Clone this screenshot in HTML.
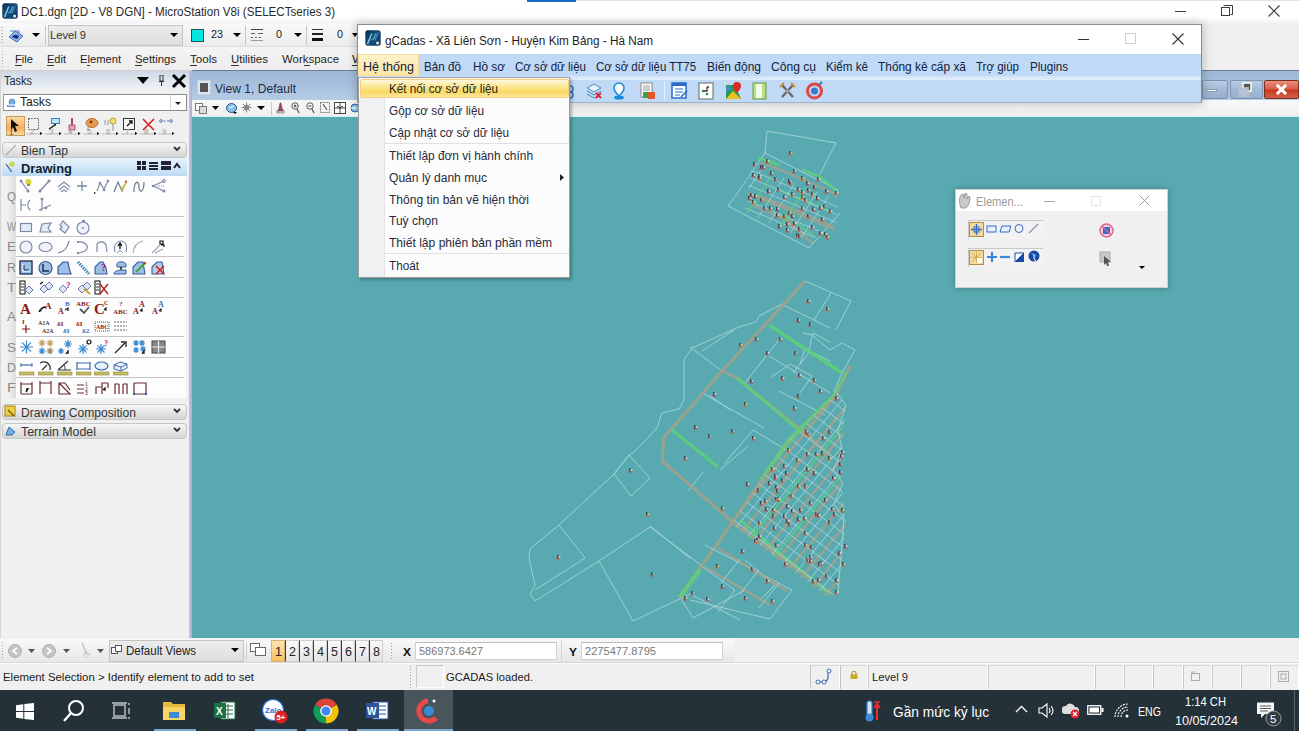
<!DOCTYPE html>
<html><head><meta charset="utf-8">
<style>
*{margin:0;padding:0;box-sizing:border-box}
html,body{width:1299px;height:731px;overflow:hidden;background:#f0f0f0;font-family:"Liberation Sans",sans-serif;color:#000;position:relative}
.a{position:absolute;display:block}
.t{position:absolute;white-space:pre;transform-origin:0 0}
</style></head><body>
<div class="a" style="left:0px;top:0px;width:1299px;height:23px;background:linear-gradient(#ffffff 0,#ffffff 17px,#f3f3f3 23px)"></div>
<div class="a" style="left:527px;top:0px;width:49px;height:2px;background:#1a6ec2"></div>
<div class="a" style="left:576px;top:0px;width:723px;height:1px;background:#e2e2e2"></div>
<svg class="a" style="left:2px;top:3px;" width="16" height="16" viewBox="0 0 16 16"><defs><linearGradient id="lg1" x1="0" y1="0" x2="1" y2="1"><stop offset="0" stop-color="#0a2c4c"/><stop offset=".5" stop-color="#17507e"/><stop offset="1" stop-color="#0c3456"/></linearGradient></defs><rect x="0.3" y="0.3" width="15.4" height="15.4" rx="2.5" fill="url(#lg1)"/><path d="M2.5 14 L6.8 3.5" stroke="#86ccf2" stroke-width="1.4"/><path d="M6.2 9.5 C8 10.5 9.5 8 10.5 3.5" stroke="#5aa4d6" stroke-width="1.2" fill="none"/><path d="M9.8 10.5 L12.8 3" stroke="#4a90c8" stroke-width="1.1"/><circle cx="12.6" cy="13" r="1.5" fill="#d8ecf8"/></svg>
<div class="t" style="left:21px;top:5.84px;font-size:12px;line-height:12px;color:#2a2a2a;transform:scaleX(0.9668);">DC1.dgn [2D - V8 DGN] - MicroStation V8i (SELECTseries 3)</div>
<div class="a" style="left:1175px;top:11px;width:11px;height:1px;background:#3a3a3a"></div>
<svg class="a" style="left:1221px;top:5px;" width="12" height="12" viewBox="0 0 12 12"><rect x="0.5" y="2.5" width="8" height="8" fill="#fff" stroke="#3a3a3a"/><path d="M2.5 0.5h9v9h-2" fill="none" stroke="#3a3a3a"/></svg>
<svg class="a" style="left:1268px;top:5px;" width="12" height="12" viewBox="0 0 12 12"><path d="M0.5 0.5L11.5 11.5M11.5 0.5L0.5 11.5" stroke="#3a3a3a" stroke-width="1.1"/></svg>
<div class="a" style="left:0px;top:23px;width:1299px;height:24px;background:linear-gradient(#f9f9f9,#ebebeb)"></div>
<div class="a" style="left:0px;top:46px;width:1202px;height:1px;background:#dcdcdc"></div>
<svg class="a" style="left:1px;top:27px;" width="2" height="16" viewBox="0 0 2 16"><rect x="0" y="0" width="2" height="1" fill="#b8b8b8"/><rect x="0" y="3" width="2" height="1" fill="#b8b8b8"/><rect x="0" y="6" width="2" height="1" fill="#b8b8b8"/><rect x="0" y="9" width="2" height="1" fill="#b8b8b8"/><rect x="0" y="12" width="2" height="1" fill="#b8b8b8"/><rect x="0" y="15" width="2" height="1" fill="#b8b8b8"/></svg>
<svg class="a" style="left:7px;top:28px;" width="17" height="15" viewBox="0 0 17 15"><path d="M2 9 L8 3 L16 8 L10 14 Z" fill="#8fb6e6" stroke="#3f6fc0"/><path d="M5 9 C7 6 10 6 12 9 L10 11 Z" fill="#1a2a80"/><path d="M3 3 h9 v5" stroke="#5a80c0" fill="none"/></svg>
<svg class="a" style="left:32px;top:33px;" width="8" height="4" viewBox="0 0 8 4"><path d="M0 0H8L4.0 4Z" fill="#000"/></svg>
<div class="a" style="left:45px;top:26px;width:1px;height:19px;background:#c8c8c8"></div>
<div class="a" style="left:48px;top:25px;width:135px;height:21px;background:linear-gradient(#ececec,#dedede);border:1px solid #c3c3c3"></div>
<div class="t" style="left:50px;top:29.69px;font-size:11px;line-height:11px;color:#333;transform:scaleX(1.0145);">Level 9</div>
<svg class="a" style="left:170px;top:33px;" width="8" height="4" viewBox="0 0 8 4"><path d="M0 0H8L4.0 4Z" fill="#000"/></svg>
<div class="a" style="left:191px;top:29px;width:13px;height:13px;background:#06e6e0;border:1px solid #205858"></div>
<div class="t" style="left:211px;top:29.27px;font-size:11.5px;line-height:11.5px;color:#222;transform:scaleX(0.9377);">23</div>
<svg class="a" style="left:233px;top:33px;" width="8" height="4" viewBox="0 0 8 4"><path d="M0 0H8L4.0 4Z" fill="#000"/></svg>
<div class="a" style="left:245px;top:26px;width:1px;height:19px;background:#c8c8c8"></div>
<svg class="a" style="left:251px;top:28px;" width="13" height="14" viewBox="0 0 13 14"><rect x="0" y="1" width="12" height="1" fill="#444"/><rect x="0" y="5" width="4" height="1" fill="#666"/><rect x="7" y="5" width="5" height="1" fill="#666"/><rect x="0" y="9" width="2" height="1" fill="#666"/><rect x="4" y="9" width="2" height="1" fill="#666"/><rect x="8" y="9" width="2" height="1" fill="#666"/><rect x="0" y="12" width="12" height="1" fill="#999"/></svg>
<div class="t" style="left:276px;top:29.27px;font-size:11.5px;line-height:11.5px;color:#222;transform:scaleX(0.9366);">0</div>
<svg class="a" style="left:294px;top:33px;" width="8" height="4" viewBox="0 0 8 4"><path d="M0 0H8L4.0 4Z" fill="#000"/></svg>
<div class="a" style="left:306px;top:26px;width:1px;height:19px;background:#c8c8c8"></div>
<svg class="a" style="left:312px;top:28px;" width="12" height="14" viewBox="0 0 12 14"><rect x="0" y="1" width="11" height="1" fill="#333"/><rect x="0" y="5" width="11" height="2" fill="#222"/><rect x="0" y="10" width="11" height="3" fill="#111"/></svg>
<div class="t" style="left:337px;top:29.27px;font-size:11.5px;line-height:11.5px;color:#222;transform:scaleX(0.9366);">0</div>
<svg class="a" style="left:352px;top:33px;" width="6" height="4" viewBox="0 0 6 4"><path d="M0 0H6L3.0 4Z" fill="#000"/></svg>
<div class="a" style="left:0px;top:47px;width:1299px;height:24px;background:linear-gradient(#f4f4f4,#ededed)"></div>
<svg class="a" style="left:2px;top:51px;" width="2" height="16" viewBox="0 0 2 16"><rect x="0" y="0" width="1" height="1" fill="#aaa"/><rect x="0" y="3" width="1" height="1" fill="#aaa"/><rect x="0" y="6" width="1" height="1" fill="#aaa"/><rect x="0" y="9" width="1" height="1" fill="#aaa"/><rect x="0" y="12" width="1" height="1" fill="#aaa"/><rect x="0" y="15" width="1" height="1" fill="#aaa"/></svg>
<div class="t" style="left:15px;top:54.43px;font-size:11.3px;line-height:11.3px;color:#1e1e1e;transform:scaleX(0.9888);">File</div>
<div class="a" style="left:15px;top:65px;width:7px;height:1px;background:#333"></div>
<div class="t" style="left:47px;top:54.43px;font-size:11.3px;line-height:11.3px;color:#1e1e1e;transform:scaleX(0.9759);">Edit</div>
<div class="a" style="left:47px;top:65px;width:7px;height:1px;background:#333"></div>
<div class="t" style="left:80px;top:54.43px;font-size:11.3px;line-height:11.3px;color:#1e1e1e;transform:scaleX(0.9891);">Element</div>
<div class="a" style="left:87px;top:65px;width:3px;height:1px;background:#333"></div>
<div class="t" style="left:135px;top:54.43px;font-size:11.3px;line-height:11.3px;color:#1e1e1e;transform:scaleX(1.0042);">Settings</div>
<div class="a" style="left:135px;top:65px;width:7px;height:1px;background:#333"></div>
<div class="t" style="left:190px;top:54.43px;font-size:11.3px;line-height:11.3px;color:#1e1e1e;transform:scaleX(1.0237);">Tools</div>
<div class="a" style="left:190px;top:65px;width:7px;height:1px;background:#333"></div>
<div class="t" style="left:231px;top:54.43px;font-size:11.3px;line-height:11.3px;color:#1e1e1e;transform:scaleX(1.0163);">Utilities</div>
<div class="a" style="left:231px;top:65px;width:8px;height:1px;background:#333"></div>
<div class="t" style="left:282px;top:54.43px;font-size:11.3px;line-height:11.3px;color:#1e1e1e;transform:scaleX(1.0125);">Workspace</div>
<div class="a" style="left:304px;top:65px;width:6px;height:1px;background:#333"></div>
<div class="t" style="left:352px;top:54.43px;font-size:11.3px;line-height:11.3px;color:#1e1e1e;transform:scaleX(1.1245);">W</div>
<div class="a" style="left:352px;top:65px;width:8px;height:1px;background:#333"></div>
<div class="a" style="left:0px;top:70px;width:1299px;height:1px;background:#d0d0d0"></div>
<div class="a" style="left:1202px;top:23px;width:97px;height:47px;background:#efefef"></div>
<div class="a" style="left:0px;top:71px;width:189px;height:567px;background:#f0f0f0"></div>
<div class="a" style="left:0px;top:71px;width:1px;height:567px;background:#d6d6d6"></div>
<div class="a" style="left:1px;top:71px;width:188px;height:20px;background:linear-gradient(#cdd7e4,#e6ecf3 70%,#eef2f6)"></div>
<div class="t" style="left:4px;top:74.84px;font-size:12px;line-height:12px;color:#1c2a3c;transform:scaleX(0.9124);">Tasks</div>
<svg class="a" style="left:137px;top:77px;" width="12" height="7" viewBox="0 0 12 7"><path d="M0 0H12L6.0 7Z" fill="#000"/></svg>
<svg class="a" style="left:159px;top:75px;" width="6" height="11" viewBox="0 0 6 11"><rect x="1" y="0" width="3" height="6" fill="none" stroke="#333"/><rect x="0" y="6" width="5" height="1" fill="#333"/><rect x="2" y="7" width="1" height="4" fill="#333"/></svg>
<svg class="a" style="left:171px;top:73px;" width="16" height="16" viewBox="0 0 16 16"><path d="M2 2L14 14M14 2L2 14" stroke="#000" stroke-width="3"/></svg>
<div class="a" style="left:3px;top:94px;width:184px;height:17px;background:#fff;border:1px solid #8a8a8a;border-left-color:#a0a0a0"></div>
<div class="a" style="left:170px;top:95px;width:1px;height:15px;background:#d8d8d8"></div>
<svg class="a" style="left:6px;top:98px;" width="11" height="10" viewBox="0 0 11 10"><path d="M1 7 h8 v2 h-8z" fill="#5a8ad0"/><circle cx="6" cy="4" r="3" fill="#7aa8e0" stroke="#3a6ab0" stroke-width="0.6"/><rect x="2" y="6" width="7" height="2" fill="#c8daf0"/></svg>
<div class="t" style="left:20px;top:95.84px;font-size:12px;line-height:12px;color:#222;transform:scaleX(1.0102);">Tasks</div>
<svg class="a" style="left:175px;top:102px;" width="6" height="3" viewBox="0 0 6 3"><path d="M0 0H6L3.0 3Z" fill="#222"/></svg>
<div class="a" style="left:6px;top:116px;width:19px;height:20px;background:linear-gradient(#fbd9a6,#f5b060 60%,#f9d89c);border:1px solid #c89b5a"></div>
<svg class="a" style="left:10px;top:119px;" width="10" height="14" viewBox="0 0 10 14"><path d="M1 0 L9 7 L5 7 L7 12 L5 13 L3 8 L1 11 Z" fill="#111"/></svg>
<svg class="a" style="left:7px;top:126px;" width="14" height="10" viewBox="0 0 14 10"><text x="2" y="9" font-size="8" font-family="Liberation Sans" fill="#6a5a3a">1</text><path d="M1 9.5 h12" stroke="#b89a6a"/></svg>
<svg class="a" style="left:25px;top:117px;" width="19" height="19" viewBox="0 0 19 19"><rect x="3.5" y="1.5" width="10" height="11" fill="none" stroke="#555" stroke-dasharray="1.5 1.2"/><path d="M1 17 h15" stroke="#b8b8b8" stroke-width="1"/><text x="5" y="16.5" font-size="8" font-family="Liberation Sans" fill="#9a9a9a">2</text><path d="M15 15 l2.5 1.5 -2.5 1.5z" fill="#000"/></svg>
<svg class="a" style="left:44px;top:117px;" width="19" height="19" viewBox="0 0 19 19"><rect x="7.5" y="1.5" width="8" height="5" fill="#bfe6f8" stroke="#3a80c0"/><path d="M5 12 L11 8" stroke="#111" stroke-width="1.3"/><path d="M10 7 l2 0 0 2z" fill="#111"/><path d="M1 17 h15" stroke="#b8b8b8" stroke-width="1"/><text x="5" y="16.5" font-size="8" font-family="Liberation Sans" fill="#9a9a9a">3</text><path d="M15 15 l2.5 1.5 -2.5 1.5z" fill="#000"/></svg>
<svg class="a" style="left:63px;top:117px;" width="19" height="19" viewBox="0 0 19 19"><path d="M9 1 V8" stroke="#b04060" stroke-width="2"/><path d="M6 8 h6 v5 h-6z" fill="#e8a0b0" stroke="#a04060" stroke-width="0.8"/><path d="M1 17 h15" stroke="#b8b8b8" stroke-width="1"/><text x="5" y="16.5" font-size="8" font-family="Liberation Sans" fill="#9a9a9a">4</text><path d="M15 15 l2.5 1.5 -2.5 1.5z" fill="#000"/></svg>
<svg class="a" style="left:82px;top:117px;" width="19" height="19" viewBox="0 0 19 19"><ellipse cx="10" cy="6" rx="6" ry="4.5" fill="#e89a50" stroke="#b06020" stroke-width="0.8"/><circle cx="9" cy="5" r="1.4" fill="#7a3a10"/><path d="M6 10 v4" stroke="#888"/><path d="M1 17 h15" stroke="#b8b8b8" stroke-width="1"/><text x="5" y="16.5" font-size="8" font-family="Liberation Sans" fill="#9a9a9a">5</text><path d="M15 15 l2.5 1.5 -2.5 1.5z" fill="#000"/></svg>
<svg class="a" style="left:101px;top:117px;" width="19" height="19" viewBox="0 0 19 19"><circle cx="12" cy="4" r="3" fill="#f0e070" stroke="#a09020" stroke-width="0.8"/><path d="M12 7 V14 M4 3 v5 M7 3 v5" stroke="#9a9aaa" stroke-width="1.1"/><path d="M1 17 h15" stroke="#b8b8b8" stroke-width="1"/><text x="5" y="16.5" font-size="8" font-family="Liberation Sans" fill="#9a9a9a">6</text><path d="M15 15 l2.5 1.5 -2.5 1.5z" fill="#000"/></svg>
<svg class="a" style="left:120px;top:117px;" width="19" height="19" viewBox="0 0 19 19"><rect x="3.5" y="1.5" width="11" height="11" fill="#f8f8f8" stroke="#333"/><path d="M7 9 L12 4 M9 4 h3 v3" stroke="#111" stroke-width="1.3" fill="none"/><path d="M1 17 h15" stroke="#b8b8b8" stroke-width="1"/><text x="5" y="16.5" font-size="8" font-family="Liberation Sans" fill="#9a9a9a">7</text><path d="M15 15 l2.5 1.5 -2.5 1.5z" fill="#000"/></svg>
<svg class="a" style="left:139px;top:117px;" width="19" height="19" viewBox="0 0 19 19"><path d="M4 2 L15 13 M15 2 L4 13" stroke="#d02020" stroke-width="1.6"/><path d="M1 17 h15" stroke="#b8b8b8" stroke-width="1"/><text x="5" y="16.5" font-size="8" font-family="Liberation Sans" fill="#9a9a9a">8</text><path d="M15 15 l2.5 1.5 -2.5 1.5z" fill="#000"/></svg>
<svg class="a" style="left:157px;top:117px;" width="19" height="19" viewBox="0 0 19 19"><path d="M3 4 h12" stroke="#5a70b0" stroke-dasharray="2 1.5"/><circle cx="4" cy="4" r="1.3" fill="#fff" stroke="#5a70b0"/><circle cx="14" cy="4" r="1.3" fill="#fff" stroke="#5a70b0"/><path d="M1 17 h15" stroke="#b8b8b8" stroke-width="1"/><text x="5" y="16.5" font-size="8" font-family="Liberation Sans" fill="#9a9a9a">9</text><path d="M15 15 l2.5 1.5 -2.5 1.5z" fill="#000"/></svg>
<div class="a" style="left:2px;top:142px;width:185px;height:16px;background:linear-gradient(#f7f7f7,#e2e2e2 60%,#d6d6d6);border:1px solid #c6c6c6;border-radius:4px"></div>
<svg class="a" style="left:5px;top:144px;" width="12" height="12" viewBox="0 0 12 12"><path d="M1 11 L11 1" stroke="#b0b0b0" stroke-width="1.2"/></svg>
<div class="t" style="left:21px;top:144.84px;font-size:12px;line-height:12px;color:#333;transform:scaleX(1.0111);">Bien Tap</div>
<svg class="a" style="left:173px;top:146px;" width="8" height="6" viewBox="0 0 8 6"><path d="M1 1 L4 4 L7 1" stroke="#333" stroke-width="1.8" fill="none"/></svg>
<div class="a" style="left:2px;top:158px;width:185px;height:18px;background:linear-gradient(#e8f2fb,#cfe5f8 60%,#bcdaf4)"></div>
<svg class="a" style="left:5px;top:160px;" width="11" height="13" viewBox="0 0 11 13"><path d="M1 4 L6 11" stroke="#555" stroke-width="1.2"/><circle cx="7" cy="4" r="2.6" fill="#c8d850"/><circle cx="6" cy="11" r="1.3" fill="#7090c0"/></svg>
<div class="t" style="left:21px;top:163.42px;font-size:12.5px;line-height:12.5px;color:#0f1f30;font-weight:700;transform:scaleX(1.0342);">Drawing</div>
<svg class="a" style="left:137px;top:161px;" width="44" height="10" viewBox="0 0 44 10"><rect x="0" y="0" width="4" height="4" fill="#223"/><rect x="5" y="0" width="4" height="4" fill="#223"/><rect x="0" y="5" width="4" height="4" fill="#223"/><rect x="5" y="5" width="4" height="4" fill="#223"/><rect x="12" y="1" width="9" height="2" fill="#223"/><rect x="12" y="4" width="9" height="2" fill="#223"/><rect x="12" y="7" width="9" height="2" fill="#223"/><rect x="24" y="0" width="10" height="4" fill="#223"/><rect x="24" y="5" width="10" height="4" fill="#223"/><path d="M37 7 L40 3 L43 7" stroke="#223" stroke-width="2" fill="none"/></svg>
<div class="a" style="left:7px;top:176px;width:179px;height:222px;background:#fdfdfd"></div>
<div class="a" style="left:7px;top:176px;width:9px;height:222px;background:linear-gradient(90deg,#f2f2f2,#dcdcdc)"></div>
<div class="a" style="left:16px;top:216px;width:168px;height:1px;background:#c4c4c4"></div>
<div class="a" style="left:16px;top:236px;width:168px;height:1px;background:#c4c4c4"></div>
<div class="a" style="left:16px;top:256px;width:168px;height:1px;background:#c4c4c4"></div>
<div class="a" style="left:16px;top:277px;width:168px;height:1px;background:#c4c4c4"></div>
<div class="a" style="left:16px;top:297px;width:168px;height:1px;background:#c4c4c4"></div>
<div class="a" style="left:16px;top:336px;width:168px;height:1px;background:#c4c4c4"></div>
<div class="a" style="left:16px;top:357px;width:168px;height:1px;background:#c4c4c4"></div>
<div class="a" style="left:16px;top:377px;width:168px;height:1px;background:#c4c4c4"></div>
<div class="t" style="left:7px;top:190.84px;font-size:12px;line-height:12px;color:#8a8a8a;transform:scaleX(0.9632);">Q</div>
<div class="t" style="left:7px;top:220.84px;font-size:12px;line-height:12px;color:#8a8a8a;transform:scaleX(0.7945);">W</div>
<div class="t" style="left:7px;top:240.84px;font-size:12px;line-height:12px;color:#8a8a8a;transform:scaleX(1.1228);">E</div>
<div class="t" style="left:7px;top:261.84px;font-size:12px;line-height:12px;color:#8a8a8a;transform:scaleX(1.0378);">R</div>
<div class="t" style="left:7px;top:281.84px;font-size:12px;line-height:12px;color:#8a8a8a;transform:scaleX(1.2255);">T</div>
<div class="t" style="left:7px;top:310.84px;font-size:12px;line-height:12px;color:#8a8a8a;transform:scaleX(1.1228);">A</div>
<div class="t" style="left:7px;top:341.84px;font-size:12px;line-height:12px;color:#8a8a8a;transform:scaleX(1.1228);">S</div>
<div class="t" style="left:7px;top:361.84px;font-size:12px;line-height:12px;color:#8a8a8a;transform:scaleX(1.0378);">D</div>
<div class="t" style="left:7px;top:381.84px;font-size:12px;line-height:12px;color:#8a8a8a;transform:scaleX(1.2255);">F</div>
<svg class="a" style="left:19px;top:178px;" width="16" height="17" viewBox="0 0 16 17"><path d="M2 3 L9 13" stroke="#7d8aa6" stroke-width="1.3"/><circle cx="2" cy="3" r="1.5" fill="#7d8aa6"/><circle cx="9" cy="13" r="1.5" fill="#7d8aa6"/><circle cx="9.5" cy="4" r="3" fill="#d6d83a"/><rect x="8" y="6" width="3" height="2" fill="#8a9a3a"/></svg>
<svg class="a" style="left:38px;top:178px;" width="16" height="17" viewBox="0 0 16 17"><path d="M2 13 L11 3" stroke="#7d8aa6" stroke-width="1.3"/><circle cx="2" cy="13" r="1.5" fill="#7d8aa6"/><circle cx="11" cy="3" r="1.5" fill="#7d8aa6"/></svg>
<svg class="a" style="left:57px;top:178px;" width="16" height="17" viewBox="0 0 16 17"><path d="M1 9 L7 4 L13 9 M2 12 L7 8 L12 12 M4 14 L7 12 L10 14" stroke="#7d8aa6" stroke-width="1.1" fill="none"/></svg>
<svg class="a" style="left:76px;top:178px;" width="16" height="17" viewBox="0 0 16 17"><path d="M6 3 V13 M1 8 H11" stroke="#7d8aa6" stroke-width="1.3"/></svg>
<svg class="a" style="left:94px;top:178px;" width="16" height="17" viewBox="0 0 16 17"><path d="M3 13 L6 5 L10 11 L14 3" stroke="#7d8aa6" stroke-width="1.2" fill="none"/><circle cx="6" cy="5" r="1.3" fill="#7d8aa6"/><circle cx="14" cy="3" r="1.3" fill="#7d8aa6"/><circle cx="10" cy="12" r="1.3" fill="#7d8aa6"/><path d="M0 14 l2 1 -2 1z" fill="#000"/></svg>
<svg class="a" style="left:113px;top:178px;" width="16" height="17" viewBox="0 0 16 17"><path d="M1 14 L5 4 L9 13 L13 4" stroke="#707a90" stroke-width="1.2" fill="none"/><path d="M8 12 L13 5" stroke="#c8c840" stroke-width="2"/><path d="M12 3 l2 1" stroke="#c05050" stroke-width="1.5"/></svg>
<svg class="a" style="left:132px;top:178px;" width="16" height="17" viewBox="0 0 16 17"><path d="M2 14 C2 2 7 2 7 9 C7 15 12 15 12 4" stroke="#707a90" stroke-width="1.2" fill="none"/></svg>
<svg class="a" style="left:151px;top:178px;" width="16" height="17" viewBox="0 0 16 17"><path d="M13 3 L2 8 L13 13" stroke="#7d8aa6" stroke-width="1.2" fill="none"/><circle cx="13" cy="3" r="1.5" fill="none" stroke="#7d8aa6"/><circle cx="13" cy="13" r="1.5" fill="#7d8aa6"/><circle cx="2" cy="8" r="1.3" fill="#7d8aa6"/><path d="M6 8 h7" stroke="#7d8aa6" stroke-dasharray="1 1"/></svg>
<svg class="a" style="left:19px;top:197px;" width="16" height="17" viewBox="0 0 16 17"><path d="M2 2 V14 M2 8 H7 M11 3 C8 6 8 10 11 13" stroke="#7d8aa6" stroke-width="1.2" fill="none"/></svg>
<svg class="a" style="left:38px;top:197px;" width="16" height="17" viewBox="0 0 16 17"><path d="M4 2 V11 L3 14 M1 13 L13 8" stroke="#7d8aa6" stroke-width="1.2" fill="none"/><circle cx="4" cy="2" r="1.5" fill="#7d8aa6"/><circle cx="8" cy="11" r="1.3" fill="#7d8aa6"/></svg>
<svg class="a" style="left:19px;top:219px;" width="16" height="17" viewBox="0 0 16 17"><rect x="1.5" y="4.5" width="11" height="8" fill="#e4ecf8" stroke="#7d8aa6" stroke-width="1.2"/></svg>
<svg class="a" style="left:38px;top:219px;" width="16" height="17" viewBox="0 0 16 17"><path d="M2 13 L4 5 L13 4 L10 9 L13 13 Z" fill="#e4ecf8" stroke="#7d8aa6" stroke-width="1.2"/></svg>
<svg class="a" style="left:57px;top:219px;" width="16" height="17" viewBox="0 0 16 17"><path d="M3 6 L6 2 L12 8 L8 14 L3 10 L5 8 Z" fill="#e4ecf8" stroke="#7d8aa6" stroke-width="1.2"/></svg>
<svg class="a" style="left:76px;top:219px;" width="16" height="17" viewBox="0 0 16 17"><circle cx="7" cy="9" r="6" fill="#eef2fa" stroke="#7d8aa6" stroke-width="1.2"/><circle cx="7" cy="9" r="1" fill="#7d8aa6"/><rect x="6" y="1" width="3" height="2" fill="#7d8aa6"/></svg>
<svg class="a" style="left:19px;top:239px;" width="16" height="17" viewBox="0 0 16 17"><circle cx="7" cy="8" r="6" fill="#f0f4fa" stroke="#7d8aa6" stroke-width="1.2"/></svg>
<svg class="a" style="left:38px;top:239px;" width="16" height="17" viewBox="0 0 16 17"><ellipse cx="7.5" cy="8" rx="6.5" ry="4.5" fill="#f0f4fa" stroke="#7d8aa6" stroke-width="1.2"/></svg>
<svg class="a" style="left:57px;top:239px;" width="16" height="17" viewBox="0 0 16 17"><path d="M1 14 C7 13 11 8 12 2" stroke="#6a7890" stroke-width="1.2" fill="none"/></svg>
<svg class="a" style="left:76px;top:239px;" width="16" height="17" viewBox="0 0 16 17"><path d="M2 3 C10 2 14 8 9 12 L3 14" stroke="#7d8aa6" stroke-width="1.2" fill="none"/><rect x="1" y="2" width="2" height="2" fill="#7d8aa6"/><rect x="1" y="13" width="2" height="2" fill="#7d8aa6"/></svg>
<svg class="a" style="left:94px;top:239px;" width="16" height="17" viewBox="0 0 16 17"><path d="M3 13 V5 C5 2 10 2 12 6 L13 13" stroke="#7d8aa6" stroke-width="1.2" fill="none"/></svg>
<svg class="a" style="left:113px;top:239px;" width="16" height="17" viewBox="0 0 16 17"><path d="M2 13 C0 5 5 2 8 2 C11 2 15 5 13 13" stroke="#7d8aa6" stroke-width="1.1" fill="none"/><path d="M7 10 V5 M5 7 L7 4 L9 7" stroke="#111" stroke-width="1.3" fill="none"/><path d="M4 14 L7 11 L10 14" stroke="#7d8aa6" fill="none"/></svg>
<svg class="a" style="left:132px;top:239px;" width="16" height="17" viewBox="0 0 16 17"><path d="M1 14 C2 7 6 3 11 2" stroke="#9aa4b8" stroke-width="1.1" fill="none"/></svg>
<svg class="a" style="left:151px;top:239px;" width="16" height="17" viewBox="0 0 16 17"><path d="M1 14 L9 6 M4 14 L12 10" stroke="#9aa4b8" stroke-width="1.1" fill="none"/><path d="M9 2 h3 v3 h-3z M10 6 h3 v2" stroke="#111" stroke-width="1.2" fill="none"/></svg>
<svg class="a" style="left:0px;top:0px;" width="1" height="1" viewBox="0 0 1 1"><defs><pattern id="hp" width="3" height="3" patternUnits="userSpaceOnUse"><path d="M0 3L3 0" stroke="#3a5a9a" stroke-width="0.8"/></pattern></defs></svg>
<svg class="a" style="left:19px;top:260px;" width="16" height="17" viewBox="0 0 16 17"><rect x="1" y="1" width="12" height="13" fill="#9cc0e8" stroke="#1a2a4a" stroke-width="1.3"/><path d="M4 4 V11 H11" stroke="#fff" stroke-width="1.2" fill="none"/><path d="M5 5 V10 H10" stroke="#1a2a4a" fill="none"/></svg>
<svg class="a" style="left:38px;top:260px;" width="16" height="17" viewBox="0 0 16 17"><circle cx="7.5" cy="8" r="6.5" fill="#9cc0e8" stroke="#3a5a9a" stroke-width="1.2"/><path d="M5 4 V11 H11" stroke="#1a2a4a" stroke-width="1.5" fill="none"/></svg>
<svg class="a" style="left:57px;top:260px;" width="16" height="17" viewBox="0 0 16 17"><path d="M1 14 V7 L6 2 H11 L12 8 L14 14 Z" fill="#9cc0e8" stroke="#3a5a9a" stroke-width="1.2"/></svg>
<svg class="a" style="left:76px;top:260px;" width="16" height="17" viewBox="0 0 16 17"><path d="M2 2 L13 14" stroke="#3a80b0" stroke-width="3" stroke-dasharray="1.5 1"/></svg>
<svg class="a" style="left:94px;top:260px;" width="16" height="17" viewBox="0 0 16 17"><path d="M1 14 V7 L6 2 H9 L12 8 L13 14 Z" fill="#9cc0e8" stroke="#3a5a9a" stroke-width="1.1"/><text x="7" y="11" font-size="10" font-family="Liberation Serif" font-weight="700" fill="#a02080">?</text></svg>
<svg class="a" style="left:113px;top:260px;" width="16" height="17" viewBox="0 0 16 17"><path d="M4 4 C4 1 13 1 13 5 L13 7 H4Z" fill="#9cc0e8" stroke="#3a5a9a"/><path d="M1 14 C1 11 4 10 13 10 V14 Z" fill="#9cc0e8" stroke="#3a5a9a"/><path d="M8 7 V10" stroke="#111" stroke-width="1.4"/></svg>
<svg class="a" style="left:132px;top:260px;" width="16" height="17" viewBox="0 0 16 17"><path d="M1 14 V7 L6 2 H11 L13 14 Z" fill="#9cc0e8" stroke="#3a5a9a" stroke-width="1.1"/><path d="M4 12 L13 3" stroke="#40a040" stroke-width="2"/><path d="M12 2 L14 4" stroke="#c03030" stroke-width="1.5"/></svg>
<svg class="a" style="left:151px;top:260px;" width="16" height="17" viewBox="0 0 16 17"><path d="M1 14 V7 L6 2 H11 L13 14 Z" fill="#b8cce8" stroke="#3a5a9a" stroke-width="1.1"/><path d="M5 6 L13 14 M13 6 L5 14" stroke="#d02020" stroke-width="1.6"/></svg>
<svg class="a" style="left:19px;top:280px;" width="16" height="17" viewBox="0 0 16 17"><rect x="1" y="1" width="5" height="13" fill="#fff" stroke="#333" stroke-width="1.2"/><path d="M2 4h3M2 7h3M2 10h3" stroke="#333"/><path d="M6 10 L10 6 L14 10 L10 14Z" fill="#dce8f8" stroke="#5a7ab0"/></svg>
<svg class="a" style="left:38px;top:280px;" width="16" height="17" viewBox="0 0 16 17"><path d="M2 9 L6 5 L10 9 L6 13Z M7 6 L11 2 L15 6 L11 10Z" fill="#dce8f8" stroke="#6a7aa0"/><path d="M2 4 L5 2" stroke="#111" stroke-width="1.4"/></svg>
<svg class="a" style="left:57px;top:280px;" width="16" height="17" viewBox="0 0 16 17"><path d="M2 9 L6 5 L10 9 L6 13Z" fill="#dce8f8" stroke="#6a7aa0"/><text x="9" y="8" font-size="9" font-family="Liberation Serif" font-weight="700" fill="#c02080">?</text></svg>
<svg class="a" style="left:76px;top:280px;" width="16" height="17" viewBox="0 0 16 17"><path d="M2 9 L6 5 L10 9 L6 13Z M7 6 L11 2 L15 6 L11 10Z" fill="#dce8f8" stroke="#6a7aa0"/><path d="M8 9 L14 14" stroke="#c8a040" stroke-width="2"/></svg>
<svg class="a" style="left:94px;top:280px;" width="16" height="17" viewBox="0 0 16 17"><rect x="1" y="1" width="5" height="13" fill="#fff" stroke="#333" stroke-width="1.2"/><path d="M2 4h3M2 7h3M2 10h3" stroke="#333"/><path d="M6 4 L14 14 M14 4 L6 14" stroke="#b02020" stroke-width="1.4"/></svg>
<svg class="a" style="left:19px;top:299px;" width="16" height="17" viewBox="0 0 16 17"><text x="1" y="15" font-size="15" font-family="Liberation Serif" font-weight="700" fill="#8a1a1a">A</text></svg>
<svg class="a" style="left:38px;top:299px;" width="16" height="17" viewBox="0 0 16 17"><path d="M1 13 C3 9 5 8 8 8" stroke="#111" stroke-width="1.3" fill="none"/><path d="M1 13 l1 -3 2 2z" fill="#111"/><text x="7" y="10" font-size="9" font-family="Liberation Serif" font-weight="700" fill="#8a1a1a">A</text></svg>
<svg class="a" style="left:57px;top:299px;" width="16" height="17" viewBox="0 0 16 17"><text x="1" y="15" font-size="8" font-family="Liberation Serif" font-weight="700" fill="#8a1a1a">A</text><text x="8" y="7" font-size="7" font-family="Liberation Serif" font-weight="700" fill="#3a6ab0">B</text><path d="M8 11 l3 -2 v3" stroke="#111" stroke-width="1.2" fill="none"/></svg>
<svg class="a" style="left:76px;top:299px;" width="17" height="17" viewBox="0 0 17 17"><text x="0" y="7" font-size="7" font-family="Liberation Serif" font-weight="700" fill="#8a1a1a">ABC</text><path d="M4 10 L8 14 L13 8" stroke="#555" stroke-width="1.8" fill="none"/></svg>
<svg class="a" style="left:94px;top:299px;" width="16" height="17" viewBox="0 0 16 17"><text x="0" y="15" font-size="15" font-family="Liberation Serif" font-weight="700" fill="#8a1a1a">C</text><text x="10" y="6" font-size="6" font-family="Liberation Serif" font-weight="700" fill="#8a1a1a">C</text><path d="M10 11 l2 -2 v3" stroke="#111" stroke-width="1.1" fill="none"/></svg>
<svg class="a" style="left:113px;top:299px;" width="17" height="17" viewBox="0 0 17 17"><text x="6" y="7" font-size="7" font-family="Liberation Serif" font-weight="700" fill="#c02080">?</text><text x="0" y="15" font-size="7" font-family="Liberation Serif" font-weight="700" fill="#8a1a1a">ABC</text></svg>
<svg class="a" style="left:132px;top:299px;" width="16" height="17" viewBox="0 0 16 17"><text x="1" y="15" font-size="8" font-family="Liberation Serif" font-weight="700" fill="#8a1a1a">A</text><text x="7" y="8" font-size="8" font-family="Liberation Serif" font-weight="700" fill="#8a1a1a">A</text><path d="M8 12 l2 -2 v3" stroke="#111" stroke-width="1.1" fill="none"/></svg>
<svg class="a" style="left:151px;top:299px;" width="16" height="17" viewBox="0 0 16 17"><text x="1" y="15" font-size="8" font-family="Liberation Serif" font-weight="700" fill="#8a1a1a">A</text><text x="7" y="8" font-size="8" font-family="Liberation Serif" font-weight="700" fill="#3a6ab0">A</text><path d="M8 12 l2 -2 v3" stroke="#111" stroke-width="1.1" fill="none"/></svg>
<svg class="a" style="left:19px;top:318px;" width="16" height="17" viewBox="0 0 16 17"><path d="M7 7 V15 M3 11 H11" stroke="#8a1a1a" stroke-width="1.2"/><text x="3" y="6" font-size="7" font-family="Liberation Serif" font-weight="700" fill="#8a1a1a">I</text></svg>
<svg class="a" style="left:38px;top:318px;" width="17" height="17" viewBox="0 0 17 17"><text x="0" y="7" font-size="6" font-family="Liberation Serif" font-weight="700" fill="#5a3a3a">A1A</text><text x="4" y="15" font-size="6" font-family="Liberation Serif" font-weight="700" fill="#5a3a3a">A2A</text></svg>
<svg class="a" style="left:57px;top:318px;" width="16" height="17" viewBox="0 0 16 17"><text x="0" y="8" font-size="7" font-family="Liberation Serif" font-weight="700" fill="#8a1a1a">δI</text><text x="6" y="15" font-size="7" font-family="Liberation Serif" font-weight="700" fill="#3a6ab0">δI</text></svg>
<svg class="a" style="left:76px;top:318px;" width="16" height="17" viewBox="0 0 16 17"><text x="0" y="8" font-size="7" font-family="Liberation Serif" font-weight="700" fill="#8a1a1a">δI</text><text x="6" y="15" font-size="7" font-family="Liberation Serif" font-weight="700" fill="#3a6ab0">δ2</text></svg>
<svg class="a" style="left:94px;top:318px;" width="17" height="17" viewBox="0 0 17 17"><rect x="1" y="4" width="14" height="9" fill="none" stroke="#555" stroke-dasharray="1 1"/><text x="2" y="11" font-size="6" font-family="Liberation Serif" font-weight="700" fill="#8a1a1a">ABC</text></svg>
<svg class="a" style="left:113px;top:318px;" width="16" height="17" viewBox="0 0 16 17"><path d="M1 4h13M1 8h13M1 12h13" stroke="#666" stroke-dasharray="2 1"/></svg>
<svg class="a" style="left:19px;top:339px;" width="16" height="17" viewBox="0 0 16 17"><path d="M1.0 8H14.0M7.5 1.5V14.5M2.95 3.45L12.05 12.55M12.05 3.45L2.95 12.55" stroke="#3a8ad0" stroke-width="1.2"/></svg>
<svg class="a" style="left:38px;top:339px;" width="16" height="17" viewBox="0 0 16 17"><path d="M0.5 4H7.5M4 0.5V7.5M1.5500000000000003 1.5500000000000003L6.449999999999999 6.449999999999999M6.449999999999999 1.5500000000000003L1.5500000000000003 6.449999999999999" stroke="#c8a060" stroke-width="1.2"/><path d="M8.5 4H15.5M12 0.5V7.5M9.55 1.5500000000000003L14.45 6.449999999999999M14.45 1.5500000000000003L9.55 6.449999999999999" stroke="#c8a060" stroke-width="1.2"/><path d="M0.5 12H7.5M4 8.5V15.5M1.5500000000000003 9.55L6.449999999999999 14.45M6.449999999999999 9.55L1.5500000000000003 14.45" stroke="#3a8ad0" stroke-width="1.2"/><path d="M8.5 12H15.5M12 8.5V15.5M9.55 9.55L14.45 14.45M14.45 9.55L9.55 14.45" stroke="#a08a70" stroke-width="1.2"/></svg>
<svg class="a" style="left:57px;top:339px;" width="16" height="17" viewBox="0 0 16 17"><path d="M7 5H15M11 1V9M8.2 2.2L13.8 7.8M13.8 2.2L8.2 7.8" stroke="#3a8ad0" stroke-width="1.2"/><path d="M1 12H7M4 9V15M1.9000000000000004 9.9L6.1 14.1M6.1 9.9L1.9000000000000004 14.1" stroke="#3a8ad0" stroke-width="1.2"/><path d="M9 15 l2 -3 v3" stroke="#111" stroke-width="1.2" fill="none"/></svg>
<svg class="a" style="left:76px;top:339px;" width="16" height="17" viewBox="0 0 16 17"><path d="M2 10H12M7 5V15M3.5 6.5L10.5 13.5M10.5 6.5L3.5 13.5" stroke="#3a8ad0" stroke-width="1.2"/><circle cx="13" cy="3" r="2" fill="none" stroke="#111" stroke-width="1.2"/></svg>
<svg class="a" style="left:94px;top:339px;" width="16" height="17" viewBox="0 0 16 17"><path d="M2 10H12M7 5V15M3.5 6.5L10.5 13.5M10.5 6.5L3.5 13.5" stroke="#3a8ad0" stroke-width="1.2"/><text x="10" y="7" font-size="8" font-family="Liberation Serif" font-weight="700" fill="#c02080">?</text></svg>
<svg class="a" style="left:113px;top:339px;" width="16" height="17" viewBox="0 0 16 17"><path d="M2 14 L12 4" stroke="#222" stroke-width="1.3"/><path d="M8 3 H13 V8" stroke="#222" stroke-width="1.3" fill="none"/></svg>
<svg class="a" style="left:132px;top:339px;" width="16" height="17" viewBox="0 0 16 17"><path d="M1 4H7M4 1V7M1.9000000000000004 1.9000000000000004L6.1 6.1M6.1 1.9000000000000004L1.9000000000000004 6.1" stroke="#3a8ad0" stroke-width="1.2"/><path d="M7 4H13M10 1V7M7.9 1.9000000000000004L12.1 6.1M12.1 1.9000000000000004L7.9 6.1" stroke="#3a8ad0" stroke-width="1.2"/><path d="M1 11H7M4 8V14M1.9000000000000004 8.9L6.1 13.1M6.1 8.9L1.9000000000000004 13.1" stroke="#3a8ad0" stroke-width="1.2"/><path d="M8 10H14M11 7V13M8.9 7.9L13.1 12.1M13.1 7.9L8.9 12.1" stroke="#3a8ad0" stroke-width="1.2"/><path d="M10 15 l2 -3 v3" stroke="#111" stroke-width="1.2" fill="none"/></svg>
<svg class="a" style="left:151px;top:339px;" width="16" height="17" viewBox="0 0 16 17"><rect x="1" y="2" width="13" height="12" fill="#8a8a8a" stroke="#444"/><path d="M1 8h13M7.5 2v12" stroke="#eee" stroke-width="1.2"/></svg>
<svg class="a" style="left:19px;top:359px;" width="16" height="17" viewBox="0 0 16 17"><path d="M2 6h11" stroke="#3a6ab0" stroke-width="1.2"/><path d="M2 4v4M13 4v4" stroke="#3a6ab0"/><rect x="0" y="13" width="15" height="3" fill="#c8c060" stroke="#8a8040" stroke-width="0.6"/></svg>
<svg class="a" style="left:38px;top:359px;" width="16" height="17" viewBox="0 0 16 17"><path d="M2 4 C8 1 13 5 12 11" stroke="#333" stroke-width="1.3" fill="none"/><path d="M4 11 L9 6" stroke="#333" stroke-width="1.2"/><rect x="0" y="13" width="15" height="3" fill="#c8c060" stroke="#8a8040" stroke-width="0.6"/></svg>
<svg class="a" style="left:57px;top:359px;" width="16" height="17" viewBox="0 0 16 17"><path d="M1 11 H14 M1 11 L11 2" stroke="#333" stroke-width="1.2" fill="none"/><path d="M7 6 C8 8 8 9 8 11" stroke="#333" fill="none"/><rect x="0" y="13" width="15" height="3" fill="#c8c060" stroke="#8a8040" stroke-width="0.6"/></svg>
<svg class="a" style="left:76px;top:359px;" width="16" height="17" viewBox="0 0 16 17"><path d="M1 3 V11 M14 3 V11 M1 4 H14 M1 10 H14" stroke="#3a6ab0" stroke-width="1.2" fill="none"/><rect x="0" y="13" width="15" height="3" fill="#c8c060" stroke="#8a8040" stroke-width="0.6"/></svg>
<svg class="a" style="left:94px;top:359px;" width="16" height="17" viewBox="0 0 16 17"><ellipse cx="7.5" cy="7" rx="6.5" ry="4" fill="#e8f0f8" stroke="#3a6ab0" stroke-width="1.2"/><rect x="0" y="13" width="15" height="3" fill="#c8c060" stroke="#8a8040" stroke-width="0.6"/></svg>
<svg class="a" style="left:113px;top:359px;" width="16" height="17" viewBox="0 0 16 17"><path d="M1 6 L7 3 L14 5 L14 9 L8 12 L1 10 Z M1 6 L8 8 L14 5 M8 8 V12" stroke="#3a6ab0" fill="#e8f0f8" stroke-width="1"/><rect x="0" y="13" width="15" height="3" fill="#c8c060" stroke="#8a8040" stroke-width="0.6"/></svg>
<svg class="a" style="left:19px;top:380px;" width="16" height="17" viewBox="0 0 16 17"><path d="M2 2 V14 M13 2 V14 M2 4 H13 M2 14 H13" stroke="#6a2a2a" stroke-width="1.2" fill="none"/><path d="M7 9 l2 0 -2 3" stroke="#111" stroke-width="1.4" fill="none"/></svg>
<svg class="a" style="left:38px;top:380px;" width="16" height="17" viewBox="0 0 16 17"><path d="M2 14 V3 H13 V14 M2 3 V1 M13 3 V1" stroke="#6a2a2a" stroke-width="1.2" fill="none"/></svg>
<svg class="a" style="left:57px;top:380px;" width="16" height="17" viewBox="0 0 16 17"><path d="M2 3 V14 H13 L2 3 M2 3 H8 L13 10" stroke="#6a2a2a" stroke-width="1.2" fill="none"/></svg>
<svg class="a" style="left:76px;top:380px;" width="16" height="17" viewBox="0 0 16 17"><path d="M1 5h7M1 9h7M1 13h7" stroke="#6a2a2a" stroke-width="1.1"/><text x="9" y="6" font-size="5" fill="#333">1</text><text x="9" y="11" font-size="5" fill="#333">2</text><text x="9" y="15" font-size="5" fill="#333">3</text></svg>
<svg class="a" style="left:94px;top:380px;" width="16" height="17" viewBox="0 0 16 17"><path d="M2 14 V7 H8 V3 H14 M8 7 V14 M14 3 V8" stroke="#6a2a2a" stroke-width="1.2" fill="none"/><path d="M9 10 l2 -2 v3" stroke="#111" stroke-width="1.2" fill="none"/></svg>
<svg class="a" style="left:113px;top:380px;" width="16" height="17" viewBox="0 0 16 17"><path d="M2 14 V4 H6 M10 4 H14 V14 M6 4 V14 M10 4 V14" stroke="#6a2a2a" stroke-width="1.2" fill="none"/></svg>
<svg class="a" style="left:132px;top:380px;" width="16" height="17" viewBox="0 0 16 17"><path d="M2 3 V14 H14 V3 H2" stroke="#6a2a2a" stroke-width="1.2" fill="none"/><circle cx="2" cy="14" r="1.3" fill="#3a6ab0"/><circle cx="14" cy="14" r="1.3" fill="#3a6ab0"/></svg>
<div class="a" style="left:2px;top:404px;width:185px;height:16px;background:linear-gradient(#f7f7f7,#e2e2e2 60%,#d6d6d6);border:1px solid #c6c6c6;border-radius:4px"></div>
<svg class="a" style="left:4px;top:405px;" width="14" height="13" viewBox="0 0 14 13"><rect x="1" y="1" width="10" height="10" fill="#f0d040" stroke="#a08020"/><path d="M4 5 L10 11" stroke="#553" stroke-width="1.3"/></svg>
<div class="t" style="left:21px;top:407.34px;font-size:12px;line-height:12px;color:#333;transform:scaleX(1.0084);">Drawing Composition</div>
<svg class="a" style="left:173px;top:408px;" width="8" height="6" viewBox="0 0 8 6"><path d="M1 1 L4 4 L7 1" stroke="#333" stroke-width="1.8" fill="none"/></svg>
<div class="a" style="left:2px;top:423px;width:185px;height:16px;background:linear-gradient(#f7f7f7,#e2e2e2 60%,#d6d6d6);border:1px solid #c6c6c6;border-radius:4px"></div>
<svg class="a" style="left:4px;top:424px;" width="14" height="13" viewBox="0 0 14 13"><path d="M2 11 L5 3 L11 8 L8 11 Z" fill="#7ab0e0" stroke="#2a6ab0"/></svg>
<div class="t" style="left:21px;top:426.34px;font-size:12px;line-height:12px;color:#333;transform:scaleX(1.0316);">Terrain Model</div>
<svg class="a" style="left:173px;top:427px;" width="8" height="6" viewBox="0 0 8 6"><path d="M1 1 L4 4 L7 1" stroke="#333" stroke-width="1.8" fill="none"/></svg>
<div class="a" style="left:189px;top:71px;width:3px;height:567px;background:linear-gradient(90deg,#c0c6dc,#a6b0d4)"></div>
<div class="a" style="left:192px;top:70px;width:1107px;height:1px;background:#6e7f96"></div>
<div class="a" style="left:192px;top:71px;width:1107px;height:29px;background:linear-gradient(#9db7d6,#a9c1de 50%,#b5cce6)"></div>
<svg class="a" style="left:197px;top:80px;" width="14" height="15" viewBox="0 0 14 15"><rect x="0.5" y="0.5" width="13" height="14" fill="#dde7f2" stroke="#c3d0e0"/><rect x="3" y="3" width="8" height="9" fill="#555"/></svg>
<div class="t" style="left:215px;top:83.42px;font-size:12.5px;line-height:12.5px;color:#1c2c40;transform:scaleX(0.9659);">View 1, Default</div>
<div class="a" style="left:1202px;top:80px;width:26px;height:19px;background:linear-gradient(#b9cde4,#a3bad6 50%,#98b0cf);border:1px solid #7d93b0;border-radius:2px"></div>
<div class="a" style="left:1206px;top:89px;width:11px;height:3px;background:#fff;border:1px solid #8a9ab0"></div>
<div class="a" style="left:1230px;top:80px;width:33px;height:19px;background:linear-gradient(#b9cde4,#a3bad6 50%,#98b0cf);border:1px solid #7d93b0;border-radius:2px"></div>
<svg class="a" style="left:1239px;top:82px;" width="16" height="16" viewBox="0 0 16 16"><rect x="4" y="1" width="8" height="8" fill="#555" stroke="#fff" stroke-width="1.5"/><rect x="1" y="6" width="8" height="8" fill="#b0c4dc" stroke="#fff" stroke-width="1.5"/><rect x="1" y="6" width="8" height="8" fill="none" stroke="#444" stroke-width="0.5"/></svg>
<div class="a" style="left:1264px;top:80px;width:35px;height:19px;background:linear-gradient(#e8907a,#d8604a 45%,#c83a20 55%,#d06048);border:1px solid #7a3020;border-radius:2px"></div>
<svg class="a" style="left:1275px;top:83px;" width="13" height="13" viewBox="0 0 13 13"><path d="M2 2L11 11M11 2L2 11" stroke="#fff" stroke-width="3"/><path d="M2 2L11 11M11 2L2 11" stroke="#fff" stroke-width="2"/></svg>
<div class="a" style="left:192px;top:100px;width:1107px;height:17px;background:linear-gradient(#f8f8f8,#eeeeee)"></div>
<div class="a" style="left:192px;top:116px;width:1107px;height:1px;background:#d4f0f4"></div>
<svg class="a" style="left:195px;top:103px;" width="12" height="11" viewBox="0 0 12 11"><rect x="0.5" y="0.5" width="7" height="7" fill="#fff" stroke="#777"/><rect x="4.5" y="3.5" width="7" height="7" fill="#ddd" stroke="#777"/></svg>
<svg class="a" style="left:212px;top:106px;" width="7" height="4" viewBox="0 0 7 4"><path d="M0 0H7L3.5 4Z" fill="#000"/></svg>
<svg class="a" style="left:226px;top:102px;" width="11" height="12" viewBox="0 0 11 12"><ellipse cx="5.5" cy="6" rx="5" ry="4.5" fill="#8ac0e8" stroke="#2a5a9a"/><path d="M3 6 L8 4" stroke="#fff"/><path d="M7 10 l2 2 2 -2z" fill="#000"/></svg>
<svg class="a" style="left:241px;top:102px;" width="11" height="11" viewBox="0 0 11 11"><circle cx="5.5" cy="5.5" r="2.5" fill="#f0e070" stroke="#808080"/><path d="M5.5 5.5 L10.5 5.5" stroke="#888"/><path d="M5.5 5.5 L9.0 9.0" stroke="#888"/><path d="M5.5 5.5 L5.5 10.5" stroke="#888"/><path d="M5.5 5.5 L2.0 9.0" stroke="#888"/><path d="M5.5 5.5 L0.5 5.5" stroke="#888"/><path d="M5.5 5.5 L2.0 2.0" stroke="#888"/><path d="M5.5 5.5 L5.5 0.5" stroke="#888"/><path d="M5.5 5.5 L9.0 2.0" stroke="#888"/></svg>
<svg class="a" style="left:257px;top:106px;" width="8" height="4" viewBox="0 0 8 4"><path d="M0 0H8L4.0 4Z" fill="#000"/></svg>
<div class="a" style="left:271px;top:102px;width:1px;height:13px;background:#c8c8c8"></div>
<svg class="a" style="left:276px;top:102px;" width="9" height="12" viewBox="0 0 9 12"><path d="M4 1 L5 1 L6 6 L8 10 H1 L3 6 Z" fill="#a04060" stroke="#555" stroke-width="0.6"/><rect x="1" y="9" width="7" height="2" fill="#ccc" stroke="#555" stroke-width="0.5"/></svg>
<svg class="a" style="left:291px;top:102px;" width="9" height="12" viewBox="0 0 9 12"><circle cx="4" cy="4" r="3.2" fill="#fff" stroke="#555"/><path d="M2.5 4h3M4 2.5v3" stroke="#333"/><path d="M6 7 L8 11" stroke="#555" stroke-width="1.3"/></svg>
<svg class="a" style="left:306px;top:102px;" width="9" height="12" viewBox="0 0 9 12"><circle cx="4" cy="4" r="3.2" fill="#fff" stroke="#555"/><path d="M2.5 4h3" stroke="#333"/><path d="M6 7 L8 11" stroke="#555" stroke-width="1.3"/></svg>
<svg class="a" style="left:320px;top:102px;" width="10" height="12" viewBox="0 0 10 12"><rect x="0.5" y="0.5" width="9" height="10" fill="none" stroke="#777" stroke-dasharray="2 1"/><path d="M3 2 L7 8" stroke="#333"/></svg>
<svg class="a" style="left:334px;top:102px;" width="12" height="12" viewBox="0 0 12 12"><rect x="0.5" y="0.5" width="11" height="11" fill="#fff" stroke="#444"/><path d="M0 6h12M6 0v12" stroke="#444"/><path d="M3 4 L6 6 L9 4" stroke="#333" fill="none"/></svg>
<svg class="a" style="left:350px;top:102px;" width="9" height="12" viewBox="0 0 9 12"><circle cx="5" cy="6" r="4" fill="#8ab8e0" stroke="#2a5aa0"/><path d="M1 6 h5" stroke="#fff" stroke-width="1.2"/></svg>
<div class="a" style="left:192px;top:117px;width:1107px;height:521px;background:#58aab0"></div>
<svg class="a" style="left:0;top:0" width="1299" height="731" viewBox="0 0 1299 731"><g><path d="M767.0 131.0 L836.0 143.0 L820.0 174.0" fill="none" stroke="#a6d4d8" stroke-width="1" stroke-opacity="0.9" stroke-linejoin="round"/><path d="M767.0 131.0 L765.0 153.0 L736.0 195.0 L728.0 206.0 L809.0 248.0 L840.0 213.0" fill="none" stroke="#a6d4d8" stroke-width="1" stroke-opacity="0.9" stroke-linejoin="round"/><path d="M765.0 153.0 L838.0 190.0 L836.0 197.0" fill="none" stroke="#a6d4d8" stroke-width="1" stroke-opacity="0.9" stroke-linejoin="round"/><path d="M758.0 158.0 L780.0 165.0" fill="none" stroke="#5cd277" stroke-width="2.8" stroke-opacity="0.85" stroke-linejoin="round"/><path d="M803.0 170.0 L820.0 177.0 L837.0 191.0" fill="none" stroke="#5cd277" stroke-width="2.5" stroke-opacity="0.85" stroke-linejoin="round"/><path d="M760.0 162.0 L790.0 174.0 L836.0 194.0" fill="none" stroke="#a8a088" stroke-width="2.4" stroke-opacity="0.8" stroke-linejoin="round"/><path d="M759.0 196.0 L800.0 212.0 L834.0 227.0" fill="none" stroke="#a8a088" stroke-width="2.6" stroke-opacity="0.8" stroke-linejoin="round"/><path d="M779.0 214.0 L812.0 243.0" fill="none" stroke="#a8a088" stroke-width="2.6" stroke-opacity="0.8" stroke-linejoin="round"/><path d="M783.0 213.0 L815.0 237.0" fill="none" stroke="#5cd277" stroke-width="1.8" stroke-opacity="0.7" stroke-linejoin="round"/><path d="M752.0 205.0 L790.0 222.0 L806.0 236.0" fill="none" stroke="#a8a088" stroke-width="2" stroke-opacity="0.8" stroke-linejoin="round"/><path d="M770.0 186.0 L830.0 211.0" fill="none" stroke="#5cd277" stroke-width="1.6" stroke-opacity="0.6" stroke-linejoin="round"/><clipPath id="c1"><polygon points="752,165 838,200 836,232 806,240 745,212"/></clipPath><g clip-path="url(#c1)"><path d="M391.7 -6.1 L1128.3 306.1" fill="none" stroke="#a6d4d8" stroke-width="0.9" stroke-opacity="0.9" stroke-linejoin="round"/><path d="M387.6 0.2 L1124.2 312.4" fill="none" stroke="#a6d4d8" stroke-width="0.9" stroke-opacity="0.9" stroke-linejoin="round"/><path d="M383.5 6.4 L1120.1 318.7" fill="none" stroke="#a8a088" stroke-width="1.8" stroke-opacity="0.8" stroke-linejoin="round"/><path d="M379.4 12.7 L1116.0 324.9" fill="none" stroke="#a6d4d8" stroke-width="0.9" stroke-opacity="0.9" stroke-linejoin="round"/><path d="M375.3 19.0 L1111.8 331.2" fill="none" stroke="#a6d4d8" stroke-width="0.9" stroke-opacity="0.9" stroke-linejoin="round"/><path d="M371.2 25.3 L1107.7 337.5" fill="none" stroke="#a6d4d8" stroke-width="0.9" stroke-opacity="0.9" stroke-linejoin="round"/><path d="M367.1 31.5 L1103.6 343.8" fill="none" stroke="#a8a088" stroke-width="1.8" stroke-opacity="0.8" stroke-linejoin="round"/><path d="M363.0 37.8 L1099.5 350.0" fill="none" stroke="#a6d4d8" stroke-width="0.9" stroke-opacity="0.9" stroke-linejoin="round"/><path d="M358.9 44.1 L1095.4 356.3" fill="none" stroke="#a6d4d8" stroke-width="0.9" stroke-opacity="0.9" stroke-linejoin="round"/><path d="M979.1 -184.6 L540.9 484.6" fill="none" stroke="#a6d4d8" stroke-width="0.9" stroke-opacity="0.9" stroke-linejoin="round"/><path d="M990.2 -180.0 L551.9 489.3" fill="none" stroke="#a6d4d8" stroke-width="0.9" stroke-opacity="0.9" stroke-linejoin="round"/><path d="M1001.2 -175.3 L563.0 494.0" fill="none" stroke="#5cd277" stroke-width="1.3" stroke-opacity="0.85" stroke-linejoin="round"/><path d="M1012.3 -170.6 L574.0 498.7" fill="none" stroke="#a6d4d8" stroke-width="0.9" stroke-opacity="0.9" stroke-linejoin="round"/><path d="M1023.3 -165.9 L585.1 503.4" fill="none" stroke="#a6d4d8" stroke-width="0.9" stroke-opacity="0.9" stroke-linejoin="round"/><path d="M1034.4 -161.2 L596.1 508.1" fill="none" stroke="#5cd277" stroke-width="1.3" stroke-opacity="0.85" stroke-linejoin="round"/><path d="M1045.4 -156.5 L607.2 512.7" fill="none" stroke="#a6d4d8" stroke-width="0.9" stroke-opacity="0.9" stroke-linejoin="round"/><path d="M1056.5 -151.9 L618.2 517.4" fill="none" stroke="#a6d4d8" stroke-width="0.9" stroke-opacity="0.9" stroke-linejoin="round"/></g><path d="M805.0 281.0 L851.0 301.0 L836.0 330.0" fill="none" stroke="#a6d4d8" stroke-width="1" stroke-opacity="0.9" stroke-linejoin="round"/><path d="M831.0 293.0 L814.0 320.0 L781.0 304.0" fill="none" stroke="#a6d4d8" stroke-width="1" stroke-opacity="0.9" stroke-linejoin="round"/><path d="M814.0 320.0 L830.0 328.0" fill="none" stroke="#a6d4d8" stroke-width="1" stroke-opacity="0.9" stroke-linejoin="round"/><path d="M803.0 333.0 L812.0 335.0 L830.0 350.0 L842.0 343.0 L855.0 350.0 L841.0 375.0 L834.0 392.0" fill="none" stroke="#a6d4d8" stroke-width="1" stroke-opacity="0.9" stroke-linejoin="round"/><path d="M782.0 304.0 L759.0 316.0 L756.0 322.0 L739.0 327.0 L692.0 348.0 L684.0 360.0 L684.0 400.0 L679.0 409.0 L662.0 413.0 L657.0 428.0 L633.0 453.0 L629.0 455.0 L614.0 474.0 L559.0 525.0 L530.0 549.0 L529.0 558.0 L535.0 585.0 L530.0 594.0 L535.0 601.0 L599.0 561.0 L650.0 527.0 L701.0 565.0" fill="none" stroke="#a6d4d8" stroke-width="1" stroke-opacity="0.9" stroke-linejoin="round"/><path d="M614.0 474.0 L629.0 455.0 L650.0 478.0 L631.0 496.0 L614.0 474.0" fill="none" stroke="#a6d4d8" stroke-width="1" stroke-opacity="0.9" stroke-linejoin="round"/><path d="M559.0 525.0 L585.0 558.0 L535.0 590.0" fill="none" stroke="#a6d4d8" stroke-width="1" stroke-opacity="0.9" stroke-linejoin="round"/><path d="M599.0 561.0 L633.0 621.0 L690.0 594.0" fill="none" stroke="#a6d4d8" stroke-width="1" stroke-opacity="0.9" stroke-linejoin="round"/><path d="M690.0 347.0 L722.0 371.0" fill="none" stroke="#a6d4d8" stroke-width="1" stroke-opacity="0.9" stroke-linejoin="round"/><path d="M745.0 383.0 L781.0 337.0" fill="none" stroke="#a6d4d8" stroke-width="1" stroke-opacity="0.9" stroke-linejoin="round"/><path d="M766.0 354.0 L830.0 393.0" fill="none" stroke="#a6d4d8" stroke-width="1" stroke-opacity="0.9" stroke-linejoin="round"/><path d="M779.0 391.0 L825.0 415.0" fill="none" stroke="#a6d4d8" stroke-width="1" stroke-opacity="0.9" stroke-linejoin="round"/><path d="M793.0 373.0 L808.0 354.0" fill="none" stroke="#a6d4d8" stroke-width="1" stroke-opacity="0.9" stroke-linejoin="round"/><path d="M808.0 354.0 L813.0 333.0 L830.0 342.0" fill="none" stroke="#a6d4d8" stroke-width="1" stroke-opacity="0.9" stroke-linejoin="round"/><path d="M702.0 393.0 L764.0 428.0" fill="none" stroke="#a6d4d8" stroke-width="1" stroke-opacity="0.9" stroke-linejoin="round"/><path d="M720.0 470.0 L748.0 446.0" fill="none" stroke="#a6d4d8" stroke-width="1" stroke-opacity="0.9" stroke-linejoin="round"/><path d="M688.0 491.0 L703.0 472.0" fill="none" stroke="#a6d4d8" stroke-width="1" stroke-opacity="0.9" stroke-linejoin="round"/><path d="M650.0 526.0 L691.0 559.0" fill="none" stroke="#a6d4d8" stroke-width="1" stroke-opacity="0.9" stroke-linejoin="round"/><path d="M690.0 594.0 L740.0 620.0" fill="none" stroke="#a6d4d8" stroke-width="1" stroke-opacity="0.9" stroke-linejoin="round"/><path d="M745.0 560.0 L775.0 585.0 L760.0 600.0" fill="none" stroke="#a6d4d8" stroke-width="1" stroke-opacity="0.9" stroke-linejoin="round"/><path d="M700.0 565.0 L735.0 590.0 L718.0 612.0" fill="none" stroke="#a6d4d8" stroke-width="1" stroke-opacity="0.9" stroke-linejoin="round"/><path d="M680.0 597.0 L693.0 618.0 L745.0 590.0" fill="none" stroke="#a6d4d8" stroke-width="1" stroke-opacity="0.9" stroke-linejoin="round"/><path d="M702.0 351.0 L734.0 330.0" fill="none" stroke="#a6d4d8" stroke-width="1" stroke-opacity="0.9" stroke-linejoin="round"/><path d="M724.0 464.0 L753.0 430.0" fill="none" stroke="#a6d4d8" stroke-width="1" stroke-opacity="0.9" stroke-linejoin="round"/><path d="M770.0 378.0 L790.0 364.0 L812.0 376.0 L800.0 393.0" fill="none" stroke="#a6d4d8" stroke-width="1" stroke-opacity="0.9" stroke-linejoin="round"/><path d="M800.0 364.0 L805.0 349.0 L830.0 361.0" fill="none" stroke="#a6d4d8" stroke-width="1" stroke-opacity="0.9" stroke-linejoin="round"/><path d="M753.0 430.0 L790.0 452.0" fill="none" stroke="#a6d4d8" stroke-width="1" stroke-opacity="0.9" stroke-linejoin="round"/><path d="M709.0 395.0 L730.0 410.0" fill="none" stroke="#a6d4d8" stroke-width="1" stroke-opacity="0.9" stroke-linejoin="round"/><path d="M850.0 366.0 L837.0 393.0 L788.0 442.0 L731.0 524.0 L679.0 598.0" fill="none" stroke="#a8a088" stroke-width="3.2" stroke-opacity="0.8" stroke-linejoin="round"/><path d="M846.0 372.0 L834.0 395.0 L788.0 440.0 L760.0 480.0" fill="none" stroke="#5cd277" stroke-width="2.6" stroke-opacity="0.8" stroke-linejoin="round"/><path d="M805.0 281.0 L760.0 330.0 L722.0 371.0 L690.0 408.0 L664.0 437.0 L662.0 461.0 L735.0 524.0 L830.0 594.0" fill="none" stroke="#a8a088" stroke-width="3.2" stroke-opacity="0.8" stroke-linejoin="round"/><path d="M769.0 325.0 L842.0 373.0" fill="none" stroke="#5cd277" stroke-width="3.5" stroke-opacity="0.85" stroke-linejoin="round"/><path d="M722.0 371.0 L737.0 378.0 L801.0 430.0 L830.0 455.0" fill="none" stroke="#a8a088" stroke-width="3" stroke-opacity="0.8" stroke-linejoin="round"/><path d="M737.0 378.0 L801.0 432.0" fill="none" stroke="#5cd277" stroke-width="3" stroke-opacity="0.85" stroke-linejoin="round"/><path d="M672.0 430.0 L718.0 467.0" fill="none" stroke="#5cd277" stroke-width="3" stroke-opacity="0.85" stroke-linejoin="round"/><path d="M740.0 520.0 L830.0 594.0" fill="none" stroke="#5cd277" stroke-width="2.5" stroke-opacity="0.9" stroke-linejoin="round"/><path d="M700.0 570.0 L680.0 597.0" fill="none" stroke="#5cd277" stroke-width="4" stroke-opacity="0.85" stroke-linejoin="round"/><clipPath id="c2"><polygon points="837,393 846,405 840,470 846,520 838,594 826,596 731,524 788,442"/></clipPath><g clip-path="url(#c2)"><path d="M915.8 182.3 L532.2 643.7" fill="none" stroke="#a8a088" stroke-width="2.6" stroke-opacity="0.8" stroke-linejoin="round"/><path d="M921.8 186.8 L538.2 648.2" fill="none" stroke="#a6d4d8" stroke-width="1" stroke-opacity="0.9" stroke-linejoin="round"/><path d="M927.8 191.3 L544.2 652.7" fill="none" stroke="#a8a088" stroke-width="2.6" stroke-opacity="0.8" stroke-linejoin="round"/><path d="M933.8 195.8 L550.2 657.2" fill="none" stroke="#a6d4d8" stroke-width="1" stroke-opacity="0.9" stroke-linejoin="round"/><path d="M939.8 200.3 L556.2 661.7" fill="none" stroke="#a8a088" stroke-width="2.6" stroke-opacity="0.8" stroke-linejoin="round"/><path d="M945.8 204.8 L562.2 666.2" fill="none" stroke="#a6d4d8" stroke-width="1" stroke-opacity="0.9" stroke-linejoin="round"/><path d="M951.8 209.3 L568.2 670.7" fill="none" stroke="#a8a088" stroke-width="2.6" stroke-opacity="0.8" stroke-linejoin="round"/><path d="M957.8 213.8 L574.2 675.2" fill="none" stroke="#a6d4d8" stroke-width="1" stroke-opacity="0.9" stroke-linejoin="round"/><path d="M963.8 218.3 L580.2 679.7" fill="none" stroke="#a8a088" stroke-width="2.6" stroke-opacity="0.8" stroke-linejoin="round"/><path d="M969.8 222.8 L586.2 684.2" fill="none" stroke="#a6d4d8" stroke-width="1" stroke-opacity="0.9" stroke-linejoin="round"/><path d="M975.8 227.3 L592.2 688.7" fill="none" stroke="#a8a088" stroke-width="2.6" stroke-opacity="0.8" stroke-linejoin="round"/><path d="M981.8 231.8 L598.2 693.2" fill="none" stroke="#a6d4d8" stroke-width="1" stroke-opacity="0.9" stroke-linejoin="round"/><path d="M987.8 236.3 L604.2 697.7" fill="none" stroke="#a8a088" stroke-width="2.6" stroke-opacity="0.8" stroke-linejoin="round"/><path d="M993.8 240.8 L610.2 702.2" fill="none" stroke="#a6d4d8" stroke-width="1" stroke-opacity="0.9" stroke-linejoin="round"/><path d="M999.8 245.3 L616.2 706.7" fill="none" stroke="#a8a088" stroke-width="2.6" stroke-opacity="0.8" stroke-linejoin="round"/><path d="M1005.8 249.8 L622.2 711.2" fill="none" stroke="#a6d4d8" stroke-width="1" stroke-opacity="0.9" stroke-linejoin="round"/><path d="M1011.8 254.3 L628.2 715.7" fill="none" stroke="#a8a088" stroke-width="2.6" stroke-opacity="0.8" stroke-linejoin="round"/><path d="M1017.8 258.8 L634.2 720.2" fill="none" stroke="#a6d4d8" stroke-width="1" stroke-opacity="0.9" stroke-linejoin="round"/><path d="M1023.8 263.3 L640.2 724.7" fill="none" stroke="#a8a088" stroke-width="2.6" stroke-opacity="0.8" stroke-linejoin="round"/><path d="M1029.8 267.8 L646.2 729.2" fill="none" stroke="#a6d4d8" stroke-width="1" stroke-opacity="0.9" stroke-linejoin="round"/><path d="M1035.8 272.3 L652.2 733.7" fill="none" stroke="#a8a088" stroke-width="2.6" stroke-opacity="0.8" stroke-linejoin="round"/><path d="M1041.8 276.8 L658.2 738.2" fill="none" stroke="#a6d4d8" stroke-width="1" stroke-opacity="0.9" stroke-linejoin="round"/><path d="M1047.8 281.3 L664.2 742.7" fill="none" stroke="#a8a088" stroke-width="2.6" stroke-opacity="0.8" stroke-linejoin="round"/><path d="M1053.8 285.8 L670.2 747.2" fill="none" stroke="#a6d4d8" stroke-width="1" stroke-opacity="0.9" stroke-linejoin="round"/><path d="M1059.8 290.3 L676.2 751.7" fill="none" stroke="#a8a088" stroke-width="2.6" stroke-opacity="0.8" stroke-linejoin="round"/><path d="M1065.8 294.8 L682.2 756.2" fill="none" stroke="#a6d4d8" stroke-width="1" stroke-opacity="0.9" stroke-linejoin="round"/><path d="M1071.8 299.3 L688.2 760.7" fill="none" stroke="#a8a088" stroke-width="2.6" stroke-opacity="0.8" stroke-linejoin="round"/><path d="M1077.8 303.8 L694.2 765.2" fill="none" stroke="#a6d4d8" stroke-width="1" stroke-opacity="0.9" stroke-linejoin="round"/><path d="M1083.8 308.3 L700.2 769.7" fill="none" stroke="#a8a088" stroke-width="2.6" stroke-opacity="0.8" stroke-linejoin="round"/><path d="M1089.8 312.8 L706.2 774.2" fill="none" stroke="#a6d4d8" stroke-width="1" stroke-opacity="0.9" stroke-linejoin="round"/><path d="M1095.8 317.3 L712.2 778.7" fill="none" stroke="#a8a088" stroke-width="2.6" stroke-opacity="0.8" stroke-linejoin="round"/><path d="M1101.8 321.8 L718.2 783.2" fill="none" stroke="#a6d4d8" stroke-width="1" stroke-opacity="0.9" stroke-linejoin="round"/><path d="M630.3 181.4 L1110.3 541.4" fill="none" stroke="#a6d4d8" stroke-width="1" stroke-opacity="0.9" stroke-linejoin="round"/><path d="M623.3 189.9 L1103.3 549.9" fill="none" stroke="#a6d4d8" stroke-width="1" stroke-opacity="0.9" stroke-linejoin="round"/><path d="M616.2 198.3 L1096.2 558.3" fill="none" stroke="#a6d4d8" stroke-width="1" stroke-opacity="0.9" stroke-linejoin="round"/><path d="M609.2 206.8 L1089.2 566.8" fill="none" stroke="#a6d4d8" stroke-width="1" stroke-opacity="0.9" stroke-linejoin="round"/><path d="M602.2 215.2 L1082.2 575.2" fill="none" stroke="#a6d4d8" stroke-width="1" stroke-opacity="0.9" stroke-linejoin="round"/><path d="M595.2 223.7 L1075.2 583.7" fill="none" stroke="#a6d4d8" stroke-width="1" stroke-opacity="0.9" stroke-linejoin="round"/><path d="M588.1 232.2 L1068.1 592.2" fill="none" stroke="#a6d4d8" stroke-width="1" stroke-opacity="0.9" stroke-linejoin="round"/><path d="M581.1 240.6 L1061.1 600.6" fill="none" stroke="#a6d4d8" stroke-width="1" stroke-opacity="0.9" stroke-linejoin="round"/><path d="M574.1 249.1 L1054.1 609.1" fill="none" stroke="#a6d4d8" stroke-width="1" stroke-opacity="0.9" stroke-linejoin="round"/><path d="M567.0 257.5 L1047.0 617.5" fill="none" stroke="#a6d4d8" stroke-width="1" stroke-opacity="0.9" stroke-linejoin="round"/><path d="M560.0 266.0 L1040.0 626.0" fill="none" stroke="#a6d4d8" stroke-width="1" stroke-opacity="0.9" stroke-linejoin="round"/><path d="M553.0 274.5 L1033.0 634.5" fill="none" stroke="#a6d4d8" stroke-width="1" stroke-opacity="0.9" stroke-linejoin="round"/><path d="M545.9 282.9 L1025.9 642.9" fill="none" stroke="#a6d4d8" stroke-width="1" stroke-opacity="0.9" stroke-linejoin="round"/><path d="M538.9 291.4 L1018.9 651.4" fill="none" stroke="#a6d4d8" stroke-width="1" stroke-opacity="0.9" stroke-linejoin="round"/><path d="M531.9 299.8 L1011.9 659.8" fill="none" stroke="#a6d4d8" stroke-width="1" stroke-opacity="0.9" stroke-linejoin="round"/><path d="M524.8 308.3 L1004.8 668.3" fill="none" stroke="#a6d4d8" stroke-width="1" stroke-opacity="0.9" stroke-linejoin="round"/><path d="M517.8 316.8 L997.8 676.8" fill="none" stroke="#a6d4d8" stroke-width="1" stroke-opacity="0.9" stroke-linejoin="round"/><path d="M510.8 325.2 L990.8 685.2" fill="none" stroke="#a6d4d8" stroke-width="1" stroke-opacity="0.9" stroke-linejoin="round"/><path d="M503.8 333.7 L983.8 693.7" fill="none" stroke="#a6d4d8" stroke-width="1" stroke-opacity="0.9" stroke-linejoin="round"/><path d="M496.7 342.1 L976.7 702.1" fill="none" stroke="#a6d4d8" stroke-width="1" stroke-opacity="0.9" stroke-linejoin="round"/><path d="M489.7 350.6 L969.7 710.6" fill="none" stroke="#a6d4d8" stroke-width="1" stroke-opacity="0.9" stroke-linejoin="round"/><path d="M482.7 359.1 L962.7 719.1" fill="none" stroke="#a6d4d8" stroke-width="1" stroke-opacity="0.9" stroke-linejoin="round"/><path d="M475.6 367.5 L955.6 727.5" fill="none" stroke="#a6d4d8" stroke-width="1" stroke-opacity="0.9" stroke-linejoin="round"/><path d="M468.6 376.0 L948.6 736.0" fill="none" stroke="#a6d4d8" stroke-width="1" stroke-opacity="0.9" stroke-linejoin="round"/><path d="M461.6 384.4 L941.6 744.4" fill="none" stroke="#a6d4d8" stroke-width="1" stroke-opacity="0.9" stroke-linejoin="round"/><path d="M454.5 392.9 L934.5 752.9" fill="none" stroke="#a6d4d8" stroke-width="1" stroke-opacity="0.9" stroke-linejoin="round"/><path d="M971.8 224.8 L588.2 686.2" fill="none" stroke="#5cd277" stroke-width="1.5" stroke-opacity="0.8" stroke-linejoin="round"/><path d="M995.8 242.8 L612.2 704.2" fill="none" stroke="#5cd277" stroke-width="1.5" stroke-opacity="0.8" stroke-linejoin="round"/><path d="M1019.8 260.8 L636.2 722.2" fill="none" stroke="#5cd277" stroke-width="1.5" stroke-opacity="0.8" stroke-linejoin="round"/></g><path d="M837.0 393.0 L846.0 405.0 L838.0 430.0 L842.0 450.0 L833.0 470.0 L843.0 483.0 L834.0 504.0 L844.0 518.0 L838.0 594.0" fill="none" stroke="#a6d4d8" stroke-width="1" stroke-opacity="0.9" stroke-linejoin="round"/><path d="M705.0 545.0 L792.0 590.0 L770.0 619.0 L690.0 600.0" fill="none" stroke="#a6d4d8" stroke-width="1" stroke-opacity="0.9" stroke-linejoin="round"/><path d="M718.0 548.0 L787.0 591.0" fill="none" stroke="#a8a088" stroke-width="2.6" stroke-opacity="0.8" stroke-linejoin="round"/><path d="M705.0 567.0 L770.0 605.0" fill="none" stroke="#a8a088" stroke-width="2.6" stroke-opacity="0.8" stroke-linejoin="round"/><path d="M721.0 583.0 L740.0 559.0" fill="none" stroke="#a6d4d8" stroke-width="1" stroke-opacity="0.9" stroke-linejoin="round"/><path d="M740.0 594.0 L759.0 570.0" fill="none" stroke="#a6d4d8" stroke-width="1" stroke-opacity="0.9" stroke-linejoin="round"/><path d="M759.0 608.0 L779.0 583.0" fill="none" stroke="#a6d4d8" stroke-width="1" stroke-opacity="0.9" stroke-linejoin="round"/><g><path d="M765 163.5 L767 160 L769 163.5Z" fill="#b05848"/><rect x="766.2" y="159" width="1.2" height="3" fill="#3a3040"/><rect x="767.6" y="160.3" width="1.8" height="1.4" fill="#e8f4f4" opacity=".8"/><path d="M788 155.5 L790 152 L792 155.5Z" fill="#c06a40"/><rect x="789.2" y="151" width="1.2" height="3" fill="#3a3040"/><rect x="790.6" y="152.3" width="1.8" height="1.4" fill="#f0e890" opacity=".8"/><path d="M769 175.5 L771 172 L773 175.5Z" fill="#9a4a58"/><rect x="770.2" y="171" width="1.2" height="3" fill="#3a3040"/><rect x="771.6" y="172.3" width="1.8" height="1.4" fill="#e8f4f4" opacity=".8"/><path d="M773 181.5 L775 178 L777 181.5Z" fill="#a86050"/><rect x="774.2" y="177" width="1.2" height="3" fill="#3a3040"/><rect x="775.6" y="178.3" width="1.8" height="1.4" fill="#7ad0e8" opacity=".8"/><path d="M787 183.5 L789 180 L791 183.5Z" fill="#b85a50"/><rect x="788.2" y="179" width="1.2" height="3" fill="#3a3040"/><rect x="789.6" y="180.3" width="1.8" height="1.4" fill="#f4f4f4" opacity=".8"/><path d="M792 173.5 L794 170 L796 173.5Z" fill="#b05848"/><rect x="793.2" y="169" width="1.2" height="3" fill="#3a3040"/><rect x="794.6" y="170.3" width="1.8" height="1.4" fill="#e8f4f4" opacity=".8"/><path d="M800 180.5 L802 177 L804 180.5Z" fill="#c06a40"/><rect x="801.2" y="176" width="1.2" height="3" fill="#3a3040"/><rect x="802.6" y="177.3" width="1.8" height="1.4" fill="#f0e890" opacity=".8"/><path d="M805 185.5 L807 182 L809 185.5Z" fill="#9a4a58"/><rect x="806.2" y="181" width="1.2" height="3" fill="#3a3040"/><rect x="807.6" y="182.3" width="1.8" height="1.4" fill="#e8f4f4" opacity=".8"/><path d="M812 189.5 L814 186 L816 189.5Z" fill="#a86050"/><rect x="813.2" y="185" width="1.2" height="3" fill="#3a3040"/><rect x="814.6" y="186.3" width="1.8" height="1.4" fill="#7ad0e8" opacity=".8"/><path d="M816 181.5 L818 178 L820 181.5Z" fill="#b85a50"/><rect x="817.2" y="177" width="1.2" height="3" fill="#3a3040"/><rect x="818.6" y="178.3" width="1.8" height="1.4" fill="#f4f4f4" opacity=".8"/><path d="M824 193.5 L826 190 L828 193.5Z" fill="#b05848"/><rect x="825.2" y="189" width="1.2" height="3" fill="#3a3040"/><rect x="826.6" y="190.3" width="1.8" height="1.4" fill="#e8f4f4" opacity=".8"/><path d="M834 195.5 L836 192 L838 195.5Z" fill="#c06a40"/><rect x="835.2" y="191" width="1.2" height="3" fill="#3a3040"/><rect x="836.6" y="192.3" width="1.8" height="1.4" fill="#f0e890" opacity=".8"/><path d="M766 193.5 L768 190 L770 193.5Z" fill="#9a4a58"/><rect x="767.2" y="189" width="1.2" height="3" fill="#3a3040"/><rect x="768.6" y="190.3" width="1.8" height="1.4" fill="#e8f4f4" opacity=".8"/><path d="M776 191.5 L778 188 L780 191.5Z" fill="#a86050"/><rect x="777.2" y="187" width="1.2" height="3" fill="#3a3040"/><rect x="778.6" y="188.3" width="1.8" height="1.4" fill="#7ad0e8" opacity=".8"/><path d="M782 199.5 L784 196 L786 199.5Z" fill="#b85a50"/><rect x="783.2" y="195" width="1.2" height="3" fill="#3a3040"/><rect x="784.6" y="196.3" width="1.8" height="1.4" fill="#f4f4f4" opacity=".8"/><path d="M790 196.5 L792 193 L794 196.5Z" fill="#b05848"/><rect x="791.2" y="192" width="1.2" height="3" fill="#3a3040"/><rect x="792.6" y="193.3" width="1.8" height="1.4" fill="#e8f4f4" opacity=".8"/><path d="M803 202.5 L805 199 L807 202.5Z" fill="#c06a40"/><rect x="804.2" y="198" width="1.2" height="3" fill="#3a3040"/><rect x="805.6" y="199.3" width="1.8" height="1.4" fill="#f0e890" opacity=".8"/><path d="M815 200.5 L817 197 L819 200.5Z" fill="#9a4a58"/><rect x="816.2" y="196" width="1.2" height="3" fill="#3a3040"/><rect x="817.6" y="197.3" width="1.8" height="1.4" fill="#e8f4f4" opacity=".8"/><path d="M822 208.5 L824 205 L826 208.5Z" fill="#a86050"/><rect x="823.2" y="204" width="1.2" height="3" fill="#3a3040"/><rect x="824.6" y="205.3" width="1.8" height="1.4" fill="#7ad0e8" opacity=".8"/><path d="M828 213.5 L830 210 L832 213.5Z" fill="#b85a50"/><rect x="829.2" y="209" width="1.2" height="3" fill="#3a3040"/><rect x="830.6" y="210.3" width="1.8" height="1.4" fill="#f4f4f4" opacity=".8"/><path d="M775 217.5 L777 214 L779 217.5Z" fill="#b05848"/><rect x="776.2" y="213" width="1.2" height="3" fill="#3a3040"/><rect x="777.6" y="214.3" width="1.8" height="1.4" fill="#e8f4f4" opacity=".8"/><path d="M787 215.5 L789 212 L791 215.5Z" fill="#c06a40"/><rect x="788.2" y="211" width="1.2" height="3" fill="#3a3040"/><rect x="789.6" y="212.3" width="1.8" height="1.4" fill="#f0e890" opacity=".8"/><path d="M792 225.5 L794 222 L796 225.5Z" fill="#9a4a58"/><rect x="793.2" y="221" width="1.2" height="3" fill="#3a3040"/><rect x="794.6" y="222.3" width="1.8" height="1.4" fill="#e8f4f4" opacity=".8"/><path d="M797 231.5 L799 228 L801 231.5Z" fill="#a86050"/><rect x="798.2" y="227" width="1.2" height="3" fill="#3a3040"/><rect x="799.6" y="228.3" width="1.8" height="1.4" fill="#7ad0e8" opacity=".8"/><path d="M810 229.5 L812 226 L814 229.5Z" fill="#b85a50"/><rect x="811.2" y="225" width="1.2" height="3" fill="#3a3040"/><rect x="812.6" y="226.3" width="1.8" height="1.4" fill="#f4f4f4" opacity=".8"/><path d="M818 235.5 L820 232 L822 235.5Z" fill="#b05848"/><rect x="819.2" y="231" width="1.2" height="3" fill="#3a3040"/><rect x="820.6" y="232.3" width="1.8" height="1.4" fill="#e8f4f4" opacity=".8"/><path d="M825 239.5 L827 236 L829 239.5Z" fill="#c06a40"/><rect x="826.2" y="235" width="1.2" height="3" fill="#3a3040"/><rect x="827.6" y="236.3" width="1.8" height="1.4" fill="#f0e890" opacity=".8"/><path d="M777 228.5 L779 225 L781 228.5Z" fill="#9a4a58"/><rect x="778.2" y="224" width="1.2" height="3" fill="#3a3040"/><rect x="779.6" y="225.3" width="1.8" height="1.4" fill="#e8f4f4" opacity=".8"/><path d="M806 218.5 L808 215 L810 218.5Z" fill="#a86050"/><rect x="807.2" y="214" width="1.2" height="3" fill="#3a3040"/><rect x="808.6" y="215.3" width="1.8" height="1.4" fill="#7ad0e8" opacity=".8"/><path d="M800 210.5 L802 207 L804 210.5Z" fill="#b85a50"/><rect x="801.2" y="206" width="1.2" height="3" fill="#3a3040"/><rect x="802.6" y="207.3" width="1.8" height="1.4" fill="#f4f4f4" opacity=".8"/><path d="M796 191.5 L798 188 L800 191.5Z" fill="#b05848"/><rect x="797.2" y="187" width="1.2" height="3" fill="#3a3040"/><rect x="798.6" y="188.3" width="1.8" height="1.4" fill="#e8f4f4" opacity=".8"/><path d="M751 204.5 L753 201 L755 204.5Z" fill="#c06a40"/><rect x="752.2" y="200" width="1.2" height="3" fill="#3a3040"/><rect x="753.6" y="201.3" width="1.8" height="1.4" fill="#f0e890" opacity=".8"/><path d="M749 197.5 L751 194 L753 197.5Z" fill="#9a4a58"/><rect x="750.2" y="193" width="1.2" height="3" fill="#3a3040"/><rect x="751.6" y="194.3" width="1.8" height="1.4" fill="#e8f4f4" opacity=".8"/><path d="M752 166.5 L754 163 L756 166.5Z" fill="#a86050"/><rect x="753.2" y="162" width="1.2" height="3" fill="#3a3040"/><rect x="754.6" y="163.3" width="1.8" height="1.4" fill="#7ad0e8" opacity=".8"/><path d="M785 232.5 L787 229 L789 232.5Z" fill="#b85a50"/><rect x="786.2" y="228" width="1.2" height="3" fill="#3a3040"/><rect x="787.6" y="229.3" width="1.8" height="1.4" fill="#f4f4f4" opacity=".8"/><path d="M757 178.5 L759 175 L761 178.5Z" fill="#b05848"/><rect x="758.2" y="174" width="1.2" height="3" fill="#3a3040"/><rect x="759.6" y="175.3" width="1.8" height="1.4" fill="#e8f4f4" opacity=".8"/><path d="M800 194.5 L802 191 L804 194.5Z" fill="#c06a40"/><rect x="801.2" y="190" width="1.2" height="3" fill="#3a3040"/><rect x="802.6" y="191.3" width="1.8" height="1.4" fill="#f0e890" opacity=".8"/><path d="M759 169.5 L761 166 L763 169.5Z" fill="#9a4a58"/><rect x="760.2" y="165" width="1.2" height="3" fill="#3a3040"/><rect x="761.6" y="166.3" width="1.8" height="1.4" fill="#e8f4f4" opacity=".8"/><path d="M762 210.5 L764 207 L766 210.5Z" fill="#a86050"/><rect x="763.2" y="206" width="1.2" height="3" fill="#3a3040"/><rect x="764.6" y="207.3" width="1.8" height="1.4" fill="#7ad0e8" opacity=".8"/><path d="M806 192.5 L808 189 L810 192.5Z" fill="#b85a50"/><rect x="807.2" y="188" width="1.2" height="3" fill="#3a3040"/><rect x="808.6" y="189.3" width="1.8" height="1.4" fill="#f4f4f4" opacity=".8"/><path d="M751 177.5 L753 174 L755 177.5Z" fill="#b05848"/><rect x="752.2" y="173" width="1.2" height="3" fill="#3a3040"/><rect x="753.6" y="174.3" width="1.8" height="1.4" fill="#e8f4f4" opacity=".8"/><path d="M810 196.5 L812 193 L814 196.5Z" fill="#c06a40"/><rect x="811.2" y="192" width="1.2" height="3" fill="#3a3040"/><rect x="812.6" y="193.3" width="1.8" height="1.4" fill="#f0e890" opacity=".8"/><path d="M775 211.5 L777 208 L779 211.5Z" fill="#9a4a58"/><rect x="776.2" y="207" width="1.2" height="3" fill="#3a3040"/><rect x="777.6" y="208.3" width="1.8" height="1.4" fill="#e8f4f4" opacity=".8"/><path d="M788 185.5 L790 182 L792 185.5Z" fill="#a86050"/><rect x="789.2" y="181" width="1.2" height="3" fill="#3a3040"/><rect x="790.6" y="182.3" width="1.8" height="1.4" fill="#7ad0e8" opacity=".8"/><path d="M820 221.5 L822 218 L824 221.5Z" fill="#b85a50"/><rect x="821.2" y="217" width="1.2" height="3" fill="#3a3040"/><rect x="822.6" y="218.3" width="1.8" height="1.4" fill="#f4f4f4" opacity=".8"/><path d="M768 210.5 L770 207 L772 210.5Z" fill="#b05848"/><rect x="769.2" y="206" width="1.2" height="3" fill="#3a3040"/><rect x="770.6" y="207.3" width="1.8" height="1.4" fill="#e8f4f4" opacity=".8"/><path d="M795 237.5 L797 234 L799 237.5Z" fill="#c06a40"/><rect x="796.2" y="233" width="1.2" height="3" fill="#3a3040"/><rect x="797.6" y="234.3" width="1.8" height="1.4" fill="#f0e890" opacity=".8"/><path d="M785 226.5 L787 223 L789 226.5Z" fill="#9a4a58"/><rect x="786.2" y="222" width="1.2" height="3" fill="#3a3040"/><rect x="787.6" y="223.3" width="1.8" height="1.4" fill="#e8f4f4" opacity=".8"/><path d="M759 202.5 L761 199 L763 202.5Z" fill="#a86050"/><rect x="760.2" y="198" width="1.2" height="3" fill="#3a3040"/><rect x="761.6" y="199.3" width="1.8" height="1.4" fill="#7ad0e8" opacity=".8"/><path d="M818 210.5 L820 207 L822 210.5Z" fill="#b85a50"/><rect x="819.2" y="206" width="1.2" height="3" fill="#3a3040"/><rect x="820.6" y="207.3" width="1.8" height="1.4" fill="#f4f4f4" opacity=".8"/><path d="M811 211.5 L813 208 L815 211.5Z" fill="#b05848"/><rect x="812.2" y="207" width="1.2" height="3" fill="#3a3040"/><rect x="813.6" y="208.3" width="1.8" height="1.4" fill="#e8f4f4" opacity=".8"/><path d="M800 199.5 L802 196 L804 199.5Z" fill="#c06a40"/><rect x="801.2" y="195" width="1.2" height="3" fill="#3a3040"/><rect x="802.6" y="196.3" width="1.8" height="1.4" fill="#f0e890" opacity=".8"/><path d="M790 218.5 L792 215 L794 218.5Z" fill="#9a4a58"/><rect x="791.2" y="214" width="1.2" height="3" fill="#3a3040"/><rect x="792.6" y="215.3" width="1.8" height="1.4" fill="#e8f4f4" opacity=".8"/><path d="M782 218.5 L784 215 L786 218.5Z" fill="#a86050"/><rect x="783.2" y="214" width="1.2" height="3" fill="#3a3040"/><rect x="784.6" y="215.3" width="1.8" height="1.4" fill="#7ad0e8" opacity=".8"/><path d="M747 200.5 L749 197 L751 200.5Z" fill="#b85a50"/><rect x="748.2" y="196" width="1.2" height="3" fill="#3a3040"/><rect x="749.6" y="197.3" width="1.8" height="1.4" fill="#f4f4f4" opacity=".8"/><path d="M761 169.5 L763 166 L765 169.5Z" fill="#b05848"/><rect x="762.2" y="165" width="1.2" height="3" fill="#3a3040"/><rect x="763.6" y="166.3" width="1.8" height="1.4" fill="#e8f4f4" opacity=".8"/><path d="M757 180.5 L759 177 L761 180.5Z" fill="#c06a40"/><rect x="758.2" y="176" width="1.2" height="3" fill="#3a3040"/><rect x="759.6" y="177.3" width="1.8" height="1.4" fill="#f0e890" opacity=".8"/><path d="M753 198.5 L755 195 L757 198.5Z" fill="#9a4a58"/><rect x="754.2" y="194" width="1.2" height="3" fill="#3a3040"/><rect x="755.6" y="195.3" width="1.8" height="1.4" fill="#e8f4f4" opacity=".8"/><path d="M797 238.5 L799 235 L801 238.5Z" fill="#a86050"/><rect x="798.2" y="234" width="1.2" height="3" fill="#3a3040"/><rect x="799.6" y="235.3" width="1.8" height="1.4" fill="#7ad0e8" opacity=".8"/><path d="M823 236.5 L825 233 L827 236.5Z" fill="#b85a50"/><rect x="824.2" y="232" width="1.2" height="3" fill="#3a3040"/><rect x="825.6" y="233.3" width="1.8" height="1.4" fill="#f4f4f4" opacity=".8"/><path d="M776 501.5 L778 498 L780 501.5Z" fill="#b05848"/><rect x="777.2" y="497" width="1.2" height="3" fill="#3a3040"/><rect x="778.6" y="498.3" width="1.8" height="1.4" fill="#e8f4f4" opacity=".8"/><path d="M771 512.5 L773 509 L775 512.5Z" fill="#c06a40"/><rect x="772.2" y="508" width="1.2" height="3" fill="#3a3040"/><rect x="773.6" y="509.3" width="1.8" height="1.4" fill="#f0e890" opacity=".8"/><path d="M812 475.5 L814 472 L816 475.5Z" fill="#9a4a58"/><rect x="813.2" y="471" width="1.2" height="3" fill="#3a3040"/><rect x="814.6" y="472.3" width="1.8" height="1.4" fill="#e8f4f4" opacity=".8"/><path d="M787 526.5 L789 523 L791 526.5Z" fill="#a86050"/><rect x="788.2" y="522" width="1.2" height="3" fill="#3a3040"/><rect x="789.6" y="523.3" width="1.8" height="1.4" fill="#7ad0e8" opacity=".8"/><path d="M803 535.5 L805 532 L807 535.5Z" fill="#b85a50"/><rect x="804.2" y="531" width="1.2" height="3" fill="#3a3040"/><rect x="805.6" y="532.3" width="1.8" height="1.4" fill="#f4f4f4" opacity=".8"/><path d="M821 440.5 L823 437 L825 440.5Z" fill="#b05848"/><rect x="822.2" y="436" width="1.2" height="3" fill="#3a3040"/><rect x="823.6" y="437.3" width="1.8" height="1.4" fill="#e8f4f4" opacity=".8"/><path d="M789 498.5 L791 495 L793 498.5Z" fill="#c06a40"/><rect x="790.2" y="494" width="1.2" height="3" fill="#3a3040"/><rect x="791.6" y="495.3" width="1.8" height="1.4" fill="#f0e890" opacity=".8"/><path d="M757 538.5 L759 535 L761 538.5Z" fill="#9a4a58"/><rect x="758.2" y="534" width="1.2" height="3" fill="#3a3040"/><rect x="759.6" y="535.3" width="1.8" height="1.4" fill="#e8f4f4" opacity=".8"/><path d="M756 492.5 L758 489 L760 492.5Z" fill="#a86050"/><rect x="757.2" y="488" width="1.2" height="3" fill="#3a3040"/><rect x="758.6" y="489.3" width="1.8" height="1.4" fill="#7ad0e8" opacity=".8"/><path d="M814 456.5 L816 453 L818 456.5Z" fill="#b85a50"/><rect x="815.2" y="452" width="1.2" height="3" fill="#3a3040"/><rect x="816.6" y="453.3" width="1.8" height="1.4" fill="#f4f4f4" opacity=".8"/><path d="M774 489.5 L776 486 L778 489.5Z" fill="#b05848"/><rect x="775.2" y="485" width="1.2" height="3" fill="#3a3040"/><rect x="776.6" y="486.3" width="1.8" height="1.4" fill="#e8f4f4" opacity=".8"/><path d="M786 452.5 L788 449 L790 452.5Z" fill="#c06a40"/><rect x="787.2" y="448" width="1.2" height="3" fill="#3a3040"/><rect x="788.6" y="449.3" width="1.8" height="1.4" fill="#f0e890" opacity=".8"/><path d="M798 512.5 L800 509 L802 512.5Z" fill="#9a4a58"/><rect x="799.2" y="508" width="1.2" height="3" fill="#3a3040"/><rect x="800.6" y="509.3" width="1.8" height="1.4" fill="#e8f4f4" opacity=".8"/><path d="M784 475.5 L786 472 L788 475.5Z" fill="#a86050"/><rect x="785.2" y="471" width="1.2" height="3" fill="#3a3040"/><rect x="786.6" y="472.3" width="1.8" height="1.4" fill="#7ad0e8" opacity=".8"/><path d="M839 458.5 L841 455 L843 458.5Z" fill="#b85a50"/><rect x="840.2" y="454" width="1.2" height="3" fill="#3a3040"/><rect x="841.6" y="455.3" width="1.8" height="1.4" fill="#f4f4f4" opacity=".8"/><path d="M805 456.5 L807 453 L809 456.5Z" fill="#b05848"/><rect x="806.2" y="452" width="1.2" height="3" fill="#3a3040"/><rect x="807.6" y="453.3" width="1.8" height="1.4" fill="#e8f4f4" opacity=".8"/><path d="M806 436.5 L808 433 L810 436.5Z" fill="#c06a40"/><rect x="807.2" y="432" width="1.2" height="3" fill="#3a3040"/><rect x="808.6" y="433.3" width="1.8" height="1.4" fill="#f0e890" opacity=".8"/><path d="M843 548.5 L845 545 L847 548.5Z" fill="#9a4a58"/><rect x="844.2" y="544" width="1.2" height="3" fill="#3a3040"/><rect x="845.6" y="545.3" width="1.8" height="1.4" fill="#e8f4f4" opacity=".8"/><path d="M775 493.5 L777 490 L779 493.5Z" fill="#a86050"/><rect x="776.2" y="489" width="1.2" height="3" fill="#3a3040"/><rect x="777.6" y="490.3" width="1.8" height="1.4" fill="#7ad0e8" opacity=".8"/><path d="M805 562.5 L807 559 L809 562.5Z" fill="#b85a50"/><rect x="806.2" y="558" width="1.2" height="3" fill="#3a3040"/><rect x="807.6" y="559.3" width="1.8" height="1.4" fill="#f4f4f4" opacity=".8"/><path d="M782 468.5 L784 465 L786 468.5Z" fill="#b05848"/><rect x="783.2" y="464" width="1.2" height="3" fill="#3a3040"/><rect x="784.6" y="465.3" width="1.8" height="1.4" fill="#e8f4f4" opacity=".8"/><path d="M841 566.5 L843 563 L845 566.5Z" fill="#c06a40"/><rect x="842.2" y="562" width="1.2" height="3" fill="#3a3040"/><rect x="843.6" y="563.3" width="1.8" height="1.4" fill="#f0e890" opacity=".8"/><path d="M837 555.5 L839 552 L841 555.5Z" fill="#9a4a58"/><rect x="838.2" y="551" width="1.2" height="3" fill="#3a3040"/><rect x="839.6" y="552.3" width="1.8" height="1.4" fill="#e8f4f4" opacity=".8"/><path d="M771 518.5 L773 515 L775 518.5Z" fill="#a86050"/><rect x="772.2" y="514" width="1.2" height="3" fill="#3a3040"/><rect x="773.6" y="515.3" width="1.8" height="1.4" fill="#7ad0e8" opacity=".8"/><path d="M774 547.5 L776 544 L778 547.5Z" fill="#b85a50"/><rect x="775.2" y="543" width="1.2" height="3" fill="#3a3040"/><rect x="776.6" y="544.3" width="1.8" height="1.4" fill="#f4f4f4" opacity=".8"/><path d="M816 582.5 L818 579 L820 582.5Z" fill="#b05848"/><rect x="817.2" y="578" width="1.2" height="3" fill="#3a3040"/><rect x="818.6" y="579.3" width="1.8" height="1.4" fill="#e8f4f4" opacity=".8"/><path d="M840 512.5 L842 509 L844 512.5Z" fill="#c06a40"/><rect x="841.2" y="508" width="1.2" height="3" fill="#3a3040"/><rect x="842.6" y="509.3" width="1.8" height="1.4" fill="#f0e890" opacity=".8"/><path d="M819 565.5 L821 562 L823 565.5Z" fill="#9a4a58"/><rect x="820.2" y="561" width="1.2" height="3" fill="#3a3040"/><rect x="821.6" y="562.3" width="1.8" height="1.4" fill="#e8f4f4" opacity=".8"/><path d="M755 542.5 L757 539 L759 542.5Z" fill="#a86050"/><rect x="756.2" y="538" width="1.2" height="3" fill="#3a3040"/><rect x="757.6" y="539.3" width="1.8" height="1.4" fill="#7ad0e8" opacity=".8"/><path d="M830 511.5 L832 508 L834 511.5Z" fill="#b85a50"/><rect x="831.2" y="507" width="1.2" height="3" fill="#3a3040"/><rect x="832.6" y="508.3" width="1.8" height="1.4" fill="#f4f4f4" opacity=".8"/><path d="M783 566.5 L785 563 L787 566.5Z" fill="#b05848"/><rect x="784.2" y="562" width="1.2" height="3" fill="#3a3040"/><rect x="785.6" y="563.3" width="1.8" height="1.4" fill="#e8f4f4" opacity=".8"/><path d="M827 460.5 L829 457 L831 460.5Z" fill="#c06a40"/><rect x="828.2" y="456" width="1.2" height="3" fill="#3a3040"/><rect x="829.6" y="457.3" width="1.8" height="1.4" fill="#f0e890" opacity=".8"/><path d="M785 523.5 L787 520 L789 523.5Z" fill="#9a4a58"/><rect x="786.2" y="519" width="1.2" height="3" fill="#3a3040"/><rect x="787.6" y="520.3" width="1.8" height="1.4" fill="#e8f4f4" opacity=".8"/><path d="M838 466.5 L840 463 L842 466.5Z" fill="#a86050"/><rect x="839.2" y="462" width="1.2" height="3" fill="#3a3040"/><rect x="840.6" y="463.3" width="1.8" height="1.4" fill="#7ad0e8" opacity=".8"/><path d="M773 480.5 L775 477 L777 480.5Z" fill="#b85a50"/><rect x="774.2" y="476" width="1.2" height="3" fill="#3a3040"/><rect x="775.6" y="477.3" width="1.8" height="1.4" fill="#f4f4f4" opacity=".8"/><path d="M772 530.5 L774 527 L776 530.5Z" fill="#b05848"/><rect x="773.2" y="526" width="1.2" height="3" fill="#3a3040"/><rect x="774.6" y="527.3" width="1.8" height="1.4" fill="#e8f4f4" opacity=".8"/><path d="M774 501.5 L776 498 L778 501.5Z" fill="#c06a40"/><rect x="775.2" y="497" width="1.2" height="3" fill="#3a3040"/><rect x="776.6" y="498.3" width="1.8" height="1.4" fill="#f0e890" opacity=".8"/><path d="M785 508.5 L787 505 L789 508.5Z" fill="#9a4a58"/><rect x="786.2" y="504" width="1.2" height="3" fill="#3a3040"/><rect x="787.6" y="505.3" width="1.8" height="1.4" fill="#e8f4f4" opacity=".8"/><path d="M811 583.5 L813 580 L815 583.5Z" fill="#a86050"/><rect x="812.2" y="579" width="1.2" height="3" fill="#3a3040"/><rect x="813.6" y="580.3" width="1.8" height="1.4" fill="#7ad0e8" opacity=".8"/><path d="M802 520.5 L804 517 L806 520.5Z" fill="#b85a50"/><rect x="803.2" y="516" width="1.2" height="3" fill="#3a3040"/><rect x="804.6" y="517.3" width="1.8" height="1.4" fill="#f4f4f4" opacity=".8"/><path d="M804 434.5 L806 431 L808 434.5Z" fill="#b05848"/><rect x="805.2" y="430" width="1.2" height="3" fill="#3a3040"/><rect x="806.6" y="431.3" width="1.8" height="1.4" fill="#e8f4f4" opacity=".8"/><path d="M795 462.5 L797 459 L799 462.5Z" fill="#c06a40"/><rect x="796.2" y="458" width="1.2" height="3" fill="#3a3040"/><rect x="797.6" y="459.3" width="1.8" height="1.4" fill="#f0e890" opacity=".8"/><path d="M764 511.5 L766 508 L768 511.5Z" fill="#9a4a58"/><rect x="765.2" y="507" width="1.2" height="3" fill="#3a3040"/><rect x="766.6" y="508.3" width="1.8" height="1.4" fill="#e8f4f4" opacity=".8"/><path d="M827 524.5 L829 521 L831 524.5Z" fill="#a86050"/><rect x="828.2" y="520" width="1.2" height="3" fill="#3a3040"/><rect x="829.6" y="521.3" width="1.8" height="1.4" fill="#7ad0e8" opacity=".8"/><path d="M782 518.5 L784 515 L786 518.5Z" fill="#b85a50"/><rect x="783.2" y="514" width="1.2" height="3" fill="#3a3040"/><rect x="784.6" y="515.3" width="1.8" height="1.4" fill="#f4f4f4" opacity=".8"/><path d="M808 563.5 L810 560 L812 563.5Z" fill="#b05848"/><rect x="809.2" y="559" width="1.2" height="3" fill="#3a3040"/><rect x="810.6" y="560.3" width="1.8" height="1.4" fill="#e8f4f4" opacity=".8"/><path d="M757 525.5 L759 522 L761 525.5Z" fill="#c06a40"/><rect x="758.2" y="521" width="1.2" height="3" fill="#3a3040"/><rect x="759.6" y="522.3" width="1.8" height="1.4" fill="#f0e890" opacity=".8"/><path d="M773 478.5 L775 475 L777 478.5Z" fill="#9a4a58"/><rect x="774.2" y="474" width="1.2" height="3" fill="#3a3040"/><rect x="775.6" y="475.3" width="1.8" height="1.4" fill="#e8f4f4" opacity=".8"/><path d="M832 516.5 L834 513 L836 516.5Z" fill="#a86050"/><rect x="833.2" y="512" width="1.2" height="3" fill="#3a3040"/><rect x="834.6" y="513.3" width="1.8" height="1.4" fill="#7ad0e8" opacity=".8"/><path d="M808 559.5 L810 556 L812 559.5Z" fill="#b85a50"/><rect x="809.2" y="555" width="1.2" height="3" fill="#3a3040"/><rect x="810.6" y="556.3" width="1.8" height="1.4" fill="#f4f4f4" opacity=".8"/><path d="M814 516.5 L816 513 L818 516.5Z" fill="#b05848"/><rect x="815.2" y="512" width="1.2" height="3" fill="#3a3040"/><rect x="816.6" y="513.3" width="1.8" height="1.4" fill="#e8f4f4" opacity=".8"/><path d="M803 547.5 L805 544 L807 547.5Z" fill="#c06a40"/><rect x="804.2" y="543" width="1.2" height="3" fill="#3a3040"/><rect x="805.6" y="544.3" width="1.8" height="1.4" fill="#f0e890" opacity=".8"/><path d="M796 521.5 L798 518 L800 521.5Z" fill="#9a4a58"/><rect x="797.2" y="517" width="1.2" height="3" fill="#3a3040"/><rect x="798.6" y="518.3" width="1.8" height="1.4" fill="#e8f4f4" opacity=".8"/><path d="M824 578.5 L826 575 L828 578.5Z" fill="#a86050"/><rect x="825.2" y="574" width="1.2" height="3" fill="#3a3040"/><rect x="826.6" y="575.3" width="1.8" height="1.4" fill="#7ad0e8" opacity=".8"/><path d="M840 454.5 L842 451 L844 454.5Z" fill="#b85a50"/><rect x="841.2" y="450" width="1.2" height="3" fill="#3a3040"/><rect x="842.6" y="451.3" width="1.8" height="1.4" fill="#f4f4f4" opacity=".8"/><path d="M759 505.5 L761 502 L763 505.5Z" fill="#b05848"/><rect x="760.2" y="501" width="1.2" height="3" fill="#3a3040"/><rect x="761.6" y="502.3" width="1.8" height="1.4" fill="#e8f4f4" opacity=".8"/><path d="M753 543.5 L755 540 L757 543.5Z" fill="#c06a40"/><rect x="754.2" y="539" width="1.2" height="3" fill="#3a3040"/><rect x="755.6" y="540.3" width="1.8" height="1.4" fill="#f0e890" opacity=".8"/><path d="M834 582.5 L836 579 L838 582.5Z" fill="#9a4a58"/><rect x="835.2" y="578" width="1.2" height="3" fill="#3a3040"/><rect x="836.6" y="579.3" width="1.8" height="1.4" fill="#e8f4f4" opacity=".8"/><path d="M820 455.5 L822 452 L824 455.5Z" fill="#a86050"/><rect x="821.2" y="451" width="1.2" height="3" fill="#3a3040"/><rect x="822.6" y="452.3" width="1.8" height="1.4" fill="#7ad0e8" opacity=".8"/><path d="M790 513.5 L792 510 L794 513.5Z" fill="#b85a50"/><rect x="791.2" y="509" width="1.2" height="3" fill="#3a3040"/><rect x="792.6" y="510.3" width="1.8" height="1.4" fill="#f4f4f4" opacity=".8"/><path d="M763 503.5 L765 500 L767 503.5Z" fill="#b05848"/><rect x="764.2" y="499" width="1.2" height="3" fill="#3a3040"/><rect x="765.6" y="500.3" width="1.8" height="1.4" fill="#e8f4f4" opacity=".8"/><path d="M803 488.5 L805 485 L807 488.5Z" fill="#c06a40"/><rect x="804.2" y="484" width="1.2" height="3" fill="#3a3040"/><rect x="805.6" y="485.3" width="1.8" height="1.4" fill="#f0e890" opacity=".8"/><path d="M767 485.5 L769 482 L771 485.5Z" fill="#9a4a58"/><rect x="768.2" y="481" width="1.2" height="3" fill="#3a3040"/><rect x="769.6" y="482.3" width="1.8" height="1.4" fill="#e8f4f4" opacity=".8"/><path d="M827 434.5 L829 431 L831 434.5Z" fill="#a86050"/><rect x="828.2" y="430" width="1.2" height="3" fill="#3a3040"/><rect x="829.6" y="431.3" width="1.8" height="1.4" fill="#7ad0e8" opacity=".8"/><path d="M808 505.5 L810 502 L812 505.5Z" fill="#b85a50"/><rect x="809.2" y="501" width="1.2" height="3" fill="#3a3040"/><rect x="810.6" y="502.3" width="1.8" height="1.4" fill="#f4f4f4" opacity=".8"/><path d="M816 517.5 L818 514 L820 517.5Z" fill="#b05848"/><rect x="817.2" y="513" width="1.2" height="3" fill="#3a3040"/><rect x="818.6" y="514.3" width="1.8" height="1.4" fill="#e8f4f4" opacity=".8"/><path d="M834 594.5 L836 591 L838 594.5Z" fill="#c06a40"/><rect x="835.2" y="590" width="1.2" height="3" fill="#3a3040"/><rect x="836.6" y="591.3" width="1.8" height="1.4" fill="#f0e890" opacity=".8"/><path d="M838 474.5 L840 471 L842 474.5Z" fill="#9a4a58"/><rect x="839.2" y="470" width="1.2" height="3" fill="#3a3040"/><rect x="840.6" y="471.3" width="1.8" height="1.4" fill="#e8f4f4" opacity=".8"/><path d="M809 549.5 L811 546 L813 549.5Z" fill="#a86050"/><rect x="810.2" y="545" width="1.2" height="3" fill="#3a3040"/><rect x="811.6" y="546.3" width="1.8" height="1.4" fill="#7ad0e8" opacity=".8"/><path d="M823 502.5 L825 499 L827 502.5Z" fill="#b85a50"/><rect x="824.2" y="498" width="1.2" height="3" fill="#3a3040"/><rect x="825.6" y="499.3" width="1.8" height="1.4" fill="#f4f4f4" opacity=".8"/><path d="M817 566.5 L819 563 L821 566.5Z" fill="#b05848"/><rect x="818.2" y="562" width="1.2" height="3" fill="#3a3040"/><rect x="819.6" y="563.3" width="1.8" height="1.4" fill="#e8f4f4" opacity=".8"/><path d="M796 488.5 L798 485 L800 488.5Z" fill="#c06a40"/><rect x="797.2" y="484" width="1.2" height="3" fill="#3a3040"/><rect x="798.6" y="485.3" width="1.8" height="1.4" fill="#f0e890" opacity=".8"/><path d="M805 471.5 L807 468 L809 471.5Z" fill="#9a4a58"/><rect x="806.2" y="467" width="1.2" height="3" fill="#3a3040"/><rect x="807.6" y="468.3" width="1.8" height="1.4" fill="#e8f4f4" opacity=".8"/><path d="M780 482.5 L782 479 L784 482.5Z" fill="#a86050"/><rect x="781.2" y="478" width="1.2" height="3" fill="#3a3040"/><rect x="782.6" y="479.3" width="1.8" height="1.4" fill="#7ad0e8" opacity=".8"/><path d="M831 480.5 L833 477 L835 480.5Z" fill="#b85a50"/><rect x="832.2" y="476" width="1.2" height="3" fill="#3a3040"/><rect x="833.6" y="477.3" width="1.8" height="1.4" fill="#f4f4f4" opacity=".8"/><path d="M806 303.5 L808 300 L810 303.5Z" fill="#b05848"/><rect x="807.2" y="299" width="1.2" height="3" fill="#3a3040"/><rect x="808.6" y="300.3" width="1.8" height="1.4" fill="#e8f4f4" opacity=".8"/><path d="M825 311.5 L827 308 L829 311.5Z" fill="#c06a40"/><rect x="826.2" y="307" width="1.2" height="3" fill="#3a3040"/><rect x="827.6" y="308.3" width="1.8" height="1.4" fill="#f0e890" opacity=".8"/><path d="M796 322.5 L798 319 L800 322.5Z" fill="#9a4a58"/><rect x="797.2" y="318" width="1.2" height="3" fill="#3a3040"/><rect x="798.6" y="319.3" width="1.8" height="1.4" fill="#e8f4f4" opacity=".8"/><path d="M808 326.5 L810 323 L812 326.5Z" fill="#a86050"/><rect x="809.2" y="322" width="1.2" height="3" fill="#3a3040"/><rect x="810.6" y="323.3" width="1.8" height="1.4" fill="#7ad0e8" opacity=".8"/><path d="M778 341.5 L780 338 L782 341.5Z" fill="#b85a50"/><rect x="779.2" y="337" width="1.2" height="3" fill="#3a3040"/><rect x="780.6" y="338.3" width="1.8" height="1.4" fill="#f4f4f4" opacity=".8"/><path d="M754 341.5 L756 338 L758 341.5Z" fill="#b05848"/><rect x="755.2" y="337" width="1.2" height="3" fill="#3a3040"/><rect x="756.6" y="338.3" width="1.8" height="1.4" fill="#e8f4f4" opacity=".8"/><path d="M738 347.5 L740 344 L742 347.5Z" fill="#c06a40"/><rect x="739.2" y="343" width="1.2" height="3" fill="#3a3040"/><rect x="740.6" y="344.3" width="1.8" height="1.4" fill="#f0e890" opacity=".8"/><path d="M765 355.5 L767 352 L769 355.5Z" fill="#9a4a58"/><rect x="766.2" y="351" width="1.2" height="3" fill="#3a3040"/><rect x="767.6" y="352.3" width="1.8" height="1.4" fill="#e8f4f4" opacity=".8"/><path d="M793 355.5 L795 352 L797 355.5Z" fill="#a86050"/><rect x="794.2" y="351" width="1.2" height="3" fill="#3a3040"/><rect x="795.6" y="352.3" width="1.8" height="1.4" fill="#7ad0e8" opacity=".8"/><path d="M780 380.5 L782 377 L784 380.5Z" fill="#b85a50"/><rect x="781.2" y="376" width="1.2" height="3" fill="#3a3040"/><rect x="782.6" y="377.3" width="1.8" height="1.4" fill="#f4f4f4" opacity=".8"/><path d="M797 377.5 L799 374 L801 377.5Z" fill="#b05848"/><rect x="798.2" y="373" width="1.2" height="3" fill="#3a3040"/><rect x="799.6" y="374.3" width="1.8" height="1.4" fill="#e8f4f4" opacity=".8"/><path d="M812 382.5 L814 379 L816 382.5Z" fill="#c06a40"/><rect x="813.2" y="378" width="1.2" height="3" fill="#3a3040"/><rect x="814.6" y="379.3" width="1.8" height="1.4" fill="#f0e890" opacity=".8"/><path d="M749 383.5 L751 380 L753 383.5Z" fill="#9a4a58"/><rect x="750.2" y="379" width="1.2" height="3" fill="#3a3040"/><rect x="751.6" y="380.3" width="1.8" height="1.4" fill="#e8f4f4" opacity=".8"/><path d="M796 398.5 L798 395 L800 398.5Z" fill="#a86050"/><rect x="797.2" y="394" width="1.2" height="3" fill="#3a3040"/><rect x="798.6" y="395.3" width="1.8" height="1.4" fill="#7ad0e8" opacity=".8"/><path d="M818 393.5 L820 390 L822 393.5Z" fill="#b85a50"/><rect x="819.2" y="389" width="1.2" height="3" fill="#3a3040"/><rect x="820.6" y="390.3" width="1.8" height="1.4" fill="#f4f4f4" opacity=".8"/><path d="M834 400.5 L836 397 L838 400.5Z" fill="#b05848"/><rect x="835.2" y="396" width="1.2" height="3" fill="#3a3040"/><rect x="836.6" y="397.3" width="1.8" height="1.4" fill="#e8f4f4" opacity=".8"/><path d="M743 406.5 L745 403 L747 406.5Z" fill="#c06a40"/><rect x="744.2" y="402" width="1.2" height="3" fill="#3a3040"/><rect x="745.6" y="403.3" width="1.8" height="1.4" fill="#f0e890" opacity=".8"/><path d="M712 396.5 L714 393 L716 396.5Z" fill="#9a4a58"/><rect x="713.2" y="392" width="1.2" height="3" fill="#3a3040"/><rect x="714.6" y="393.3" width="1.8" height="1.4" fill="#e8f4f4" opacity=".8"/><path d="M730 433.5 L732 430 L734 433.5Z" fill="#a86050"/><rect x="731.2" y="429" width="1.2" height="3" fill="#3a3040"/><rect x="732.6" y="430.3" width="1.8" height="1.4" fill="#7ad0e8" opacity=".8"/><path d="M683 460.5 L685 457 L687 460.5Z" fill="#b85a50"/><rect x="684.2" y="456" width="1.2" height="3" fill="#3a3040"/><rect x="685.6" y="457.3" width="1.8" height="1.4" fill="#f4f4f4" opacity=".8"/><path d="M628 472.5 L630 469 L632 472.5Z" fill="#b05848"/><rect x="629.2" y="468" width="1.2" height="3" fill="#3a3040"/><rect x="630.6" y="469.3" width="1.8" height="1.4" fill="#e8f4f4" opacity=".8"/><path d="M645 516.5 L647 513 L649 516.5Z" fill="#c06a40"/><rect x="646.2" y="512" width="1.2" height="3" fill="#3a3040"/><rect x="647.6" y="513.3" width="1.8" height="1.4" fill="#f0e890" opacity=".8"/><path d="M693 429.5 L695 426 L697 429.5Z" fill="#9a4a58"/><rect x="694.2" y="425" width="1.2" height="3" fill="#3a3040"/><rect x="695.6" y="426.3" width="1.8" height="1.4" fill="#e8f4f4" opacity=".8"/><path d="M707 438.5 L709 435 L711 438.5Z" fill="#a86050"/><rect x="708.2" y="434" width="1.2" height="3" fill="#3a3040"/><rect x="709.6" y="435.3" width="1.8" height="1.4" fill="#7ad0e8" opacity=".8"/><path d="M751 440.5 L753 437 L755 440.5Z" fill="#b85a50"/><rect x="752.2" y="436" width="1.2" height="3" fill="#3a3040"/><rect x="753.6" y="437.3" width="1.8" height="1.4" fill="#f4f4f4" opacity=".8"/><path d="M792 410.5 L794 407 L796 410.5Z" fill="#b05848"/><rect x="793.2" y="406" width="1.2" height="3" fill="#3a3040"/><rect x="794.6" y="407.3" width="1.8" height="1.4" fill="#e8f4f4" opacity=".8"/><path d="M770 471.5 L772 468 L774 471.5Z" fill="#c06a40"/><rect x="771.2" y="467" width="1.2" height="3" fill="#3a3040"/><rect x="772.6" y="468.3" width="1.8" height="1.4" fill="#f0e890" opacity=".8"/><path d="M745 486.5 L747 483 L749 486.5Z" fill="#9a4a58"/><rect x="746.2" y="482" width="1.2" height="3" fill="#3a3040"/><rect x="747.6" y="483.3" width="1.8" height="1.4" fill="#e8f4f4" opacity=".8"/><path d="M650 576.5 L652 573 L654 576.5Z" fill="#a86050"/><rect x="651.2" y="572" width="1.2" height="3" fill="#3a3040"/><rect x="652.6" y="573.3" width="1.8" height="1.4" fill="#7ad0e8" opacity=".8"/><path d="M556 559.5 L558 556 L560 559.5Z" fill="#b85a50"/><rect x="557.2" y="555" width="1.2" height="3" fill="#3a3040"/><rect x="558.6" y="556.3" width="1.8" height="1.4" fill="#f4f4f4" opacity=".8"/><path d="M720 510.5 L722 507 L724 510.5Z" fill="#b05848"/><rect x="721.2" y="506" width="1.2" height="3" fill="#3a3040"/><rect x="722.6" y="507.3" width="1.8" height="1.4" fill="#e8f4f4" opacity=".8"/><path d="M715 568.5 L717 565 L719 568.5Z" fill="#c06a40"/><rect x="716.2" y="564" width="1.2" height="3" fill="#3a3040"/><rect x="717.6" y="565.3" width="1.8" height="1.4" fill="#f0e890" opacity=".8"/><path d="M740 553.5 L742 550 L744 553.5Z" fill="#9a4a58"/><rect x="741.2" y="549" width="1.2" height="3" fill="#3a3040"/><rect x="742.6" y="550.3" width="1.8" height="1.4" fill="#e8f4f4" opacity=".8"/><path d="M750 571.5 L752 568 L754 571.5Z" fill="#a86050"/><rect x="751.2" y="567" width="1.2" height="3" fill="#3a3040"/><rect x="752.6" y="568.3" width="1.8" height="1.4" fill="#7ad0e8" opacity=".8"/><path d="M765 583.5 L767 580 L769 583.5Z" fill="#b85a50"/><rect x="766.2" y="579" width="1.2" height="3" fill="#3a3040"/><rect x="767.6" y="580.3" width="1.8" height="1.4" fill="#f4f4f4" opacity=".8"/><path d="M743 600.5 L745 597 L747 600.5Z" fill="#b05848"/><rect x="744.2" y="596" width="1.2" height="3" fill="#3a3040"/><rect x="745.6" y="597.3" width="1.8" height="1.4" fill="#e8f4f4" opacity=".8"/><path d="M770 603.5 L772 600 L774 603.5Z" fill="#c06a40"/><rect x="771.2" y="599" width="1.2" height="3" fill="#3a3040"/><rect x="772.6" y="600.3" width="1.8" height="1.4" fill="#f0e890" opacity=".8"/><path d="M720 588.5 L722 585 L724 588.5Z" fill="#9a4a58"/><rect x="721.2" y="584" width="1.2" height="3" fill="#3a3040"/><rect x="722.6" y="585.3" width="1.8" height="1.4" fill="#e8f4f4" opacity=".8"/><path d="M690 595.5 L692 592 L694 595.5Z" fill="#a86050"/><rect x="691.2" y="591" width="1.2" height="3" fill="#3a3040"/><rect x="692.6" y="592.3" width="1.8" height="1.4" fill="#7ad0e8" opacity=".8"/><path d="M705 601.5 L707 598 L709 601.5Z" fill="#b85a50"/><rect x="706.2" y="597" width="1.2" height="3" fill="#3a3040"/><rect x="707.6" y="598.3" width="1.8" height="1.4" fill="#f4f4f4" opacity=".8"/><path d="M683 600.5 L685 597 L687 600.5Z" fill="#b05848"/><rect x="684.2" y="596" width="1.2" height="3" fill="#3a3040"/><rect x="685.6" y="597.3" width="1.8" height="1.4" fill="#e8f4f4" opacity=".8"/></g></g></svg>
<div class="a" style="left:0px;top:638px;width:1299px;height:25px;background:#f0f0f0"></div>
<div class="a" style="left:0px;top:639px;width:734px;height:24px;background:linear-gradient(#f8f8f8,#e6e6e6)"></div>
<div class="a" style="left:0px;top:662px;width:1299px;height:1px;background:#d8d8d8"></div>
<svg class="a" style="left:2px;top:642px;" width="2" height="16" viewBox="0 0 2 16"><rect x="0" y="0" width="1" height="1" fill="#aaa"/><rect x="0" y="3" width="1" height="1" fill="#aaa"/><rect x="0" y="6" width="1" height="1" fill="#aaa"/><rect x="0" y="9" width="1" height="1" fill="#aaa"/><rect x="0" y="12" width="1" height="1" fill="#aaa"/><rect x="0" y="15" width="1" height="1" fill="#aaa"/></svg>
<svg class="a" style="left:8px;top:644px;" width="14" height="14" viewBox="0 0 14 14"><circle cx="7" cy="7" r="6.5" fill="#c4c4c4" stroke="#b0b0b0"/><path d="M9 4 L5 7 L9 10" stroke="#fff" stroke-width="1.6" fill="none"/></svg>
<svg class="a" style="left:28px;top:649px;" width="7" height="4" viewBox="0 0 7 4"><path d="M0 0H7L3.5 4Z" fill="#555"/></svg>
<svg class="a" style="left:42px;top:644px;" width="14" height="14" viewBox="0 0 14 14"><circle cx="7" cy="7" r="6.5" fill="#c4c4c4" stroke="#b0b0b0"/><path d="M5 4 L9 7 L5 10" stroke="#fff" stroke-width="1.6" fill="none"/></svg>
<svg class="a" style="left:63px;top:649px;" width="7" height="4" viewBox="0 0 7 4"><path d="M0 0H7L3.5 4Z" fill="#555"/></svg>
<svg class="a" style="left:78px;top:642px;" width="14" height="18" viewBox="0 0 14 18"><path d="M4 1 L8 10 L5 14 M8 10 L12 13" stroke="#aaa" stroke-width="1" fill="none"/><ellipse cx="8" cy="14" rx="4" ry="2" fill="#e0e0e0"/></svg>
<svg class="a" style="left:97px;top:649px;" width="7" height="4" viewBox="0 0 7 4"><path d="M0 0H7L3.5 4Z" fill="#555"/></svg>
<div class="a" style="left:109px;top:640px;width:135px;height:22px;background:linear-gradient(#ececec,#dedede);border:1px solid #c3c3c3"></div>
<svg class="a" style="left:111px;top:645px;" width="11" height="11" viewBox="0 0 11 11"><rect x="0.5" y="2.5" width="6" height="6" fill="#fff" stroke="#555"/><rect x="4.5" y="0.5" width="6" height="6" fill="#fff" stroke="#555"/></svg>
<div class="t" style="left:126px;top:644.84px;font-size:12px;line-height:12px;color:#222;transform:scaleX(0.9569);">Default Views</div>
<svg class="a" style="left:231px;top:648px;" width="8" height="4" viewBox="0 0 8 4"><path d="M0 0H8L4.0 4Z" fill="#000"/></svg>
<div class="a" style="left:246px;top:642px;width:1px;height:18px;background:#d0d0d0"></div>
<svg class="a" style="left:250px;top:643px;" width="16" height="14" viewBox="0 0 16 14"><rect x="0.5" y="0.5" width="9" height="8" fill="#fff" stroke="#666"/><rect x="5.5" y="4.5" width="10" height="8" fill="#fff" stroke="#666"/></svg>
<div class="a" style="left:271px;top:640px;width:14px;height:22px;background:linear-gradient(#fbe6b0,#f3c060);border:1px solid #d8b070"></div>
<div class="t" style="left:274.5px;top:645.84px;font-size:12px;line-height:12px;color:#222;transform:scaleX(1.0467);">1</div>
<div class="a" style="left:285px;top:640px;width:14px;height:22px;background:linear-gradient(#fafafa,#e4e4e4);border:1px solid #cfcfcf;border-left:1px solid #3a3a3a"></div>
<div class="t" style="left:288.5px;top:645.84px;font-size:12px;line-height:12px;color:#222;transform:scaleX(1.0467);">2</div>
<div class="a" style="left:299px;top:640px;width:14px;height:22px;background:linear-gradient(#fafafa,#e4e4e4);border:1px solid #cfcfcf;border-left:1px solid #3a3a3a"></div>
<div class="t" style="left:302.5px;top:645.84px;font-size:12px;line-height:12px;color:#222;transform:scaleX(1.0467);">3</div>
<div class="a" style="left:313px;top:640px;width:14px;height:22px;background:linear-gradient(#fafafa,#e4e4e4);border:1px solid #cfcfcf;border-left:1px solid #3a3a3a"></div>
<div class="t" style="left:316.5px;top:645.84px;font-size:12px;line-height:12px;color:#222;transform:scaleX(1.0467);">4</div>
<div class="a" style="left:327px;top:640px;width:14px;height:22px;background:linear-gradient(#fafafa,#e4e4e4);border:1px solid #cfcfcf;border-left:1px solid #3a3a3a"></div>
<div class="t" style="left:330.5px;top:645.84px;font-size:12px;line-height:12px;color:#222;transform:scaleX(1.0467);">5</div>
<div class="a" style="left:341px;top:640px;width:14px;height:22px;background:linear-gradient(#fafafa,#e4e4e4);border:1px solid #cfcfcf;border-left:1px solid #3a3a3a"></div>
<div class="t" style="left:344.5px;top:645.84px;font-size:12px;line-height:12px;color:#222;transform:scaleX(1.0467);">6</div>
<div class="a" style="left:355px;top:640px;width:14px;height:22px;background:linear-gradient(#fafafa,#e4e4e4);border:1px solid #cfcfcf;border-left:1px solid #3a3a3a"></div>
<div class="t" style="left:358.5px;top:645.84px;font-size:12px;line-height:12px;color:#222;transform:scaleX(1.0467);">7</div>
<div class="a" style="left:369px;top:640px;width:14px;height:22px;background:linear-gradient(#fafafa,#e4e4e4);border:1px solid #cfcfcf;border-left:1px solid #3a3a3a"></div>
<div class="t" style="left:372.5px;top:645.84px;font-size:12px;line-height:12px;color:#222;transform:scaleX(1.0467);">8</div>
<svg class="a" style="left:391px;top:643px;" width="2" height="16" viewBox="0 0 2 16"><rect x="0" y="0" width="1" height="1" fill="#999"/><rect x="0" y="3" width="1" height="1" fill="#999"/><rect x="0" y="6" width="1" height="1" fill="#999"/><rect x="0" y="9" width="1" height="1" fill="#999"/><rect x="0" y="12" width="1" height="1" fill="#999"/><rect x="0" y="15" width="1" height="1" fill="#999"/></svg>
<div class="t" style="left:403px;top:646.69px;font-size:11px;line-height:11px;color:#111;font-weight:700;transform:scaleX(1.0894);">X</div>
<div class="a" style="left:415px;top:642px;width:142px;height:18px;background:#fff;border:1px solid #d0d0d0;border-top-color:#bdbdbd"></div>
<div class="t" style="left:419px;top:646.27px;font-size:11.5px;line-height:11.5px;color:#777;transform:scaleX(0.9530);">586973.6427</div>
<div class="a" style="left:561px;top:640px;width:1px;height:22px;background:#d4d4d4"></div>
<div class="t" style="left:569px;top:646.69px;font-size:11px;line-height:11px;color:#111;font-weight:700;transform:scaleX(1.0894);">Y</div>
<div class="a" style="left:581px;top:642px;width:142px;height:18px;background:#fff;border:1px solid #d0d0d0;border-top-color:#bdbdbd"></div>
<div class="t" style="left:585px;top:646.27px;font-size:11.5px;line-height:11.5px;color:#777;transform:scaleX(0.9652);">2275477.8795</div>
<div class="a" style="left:0px;top:663px;width:1299px;height:27px;background:#f0f0f0"></div>
<div class="a" style="left:0px;top:663px;width:1299px;height:1px;background:#fafafa"></div>
<div class="t" style="left:3px;top:672.27px;font-size:11.5px;line-height:11.5px;color:#1a1a1a;transform:scaleX(0.9902);">Element Selection &gt; Identify element to add to set</div>
<svg class="a" style="left:410px;top:666px;" width="2" height="22" viewBox="0 0 2 22"><rect x="0" y="0" width="1" height="1" fill="#999"/><rect x="0" y="3" width="1" height="1" fill="#999"/><rect x="0" y="6" width="1" height="1" fill="#999"/><rect x="0" y="9" width="1" height="1" fill="#999"/><rect x="0" y="12" width="1" height="1" fill="#999"/><rect x="0" y="15" width="1" height="1" fill="#999"/><rect x="0" y="18" width="1" height="1" fill="#999"/><rect x="0" y="21" width="1" height="1" fill="#999"/></svg>
<div class="a" style="left:416px;top:665px;width:28px;height:23px;background:#f0f0f0;border:1px solid #fff;border-left-color:#c8c8c8;border-top-color:#c8c8c8"></div>
<div class="t" style="left:446px;top:672.27px;font-size:11.5px;line-height:11.5px;color:#1a1a1a;transform:scaleX(0.9721);">GCADAS loaded.</div>
<div class="a" style="left:810px;top:665px;width:30px;height:24px;border-left:1px solid #c4c4c4;border-top:1px solid #d8d8d8;border-right:1px solid #fff"></div>
<div class="a" style="left:840px;top:665px;width:28px;height:24px;border-left:1px solid #c4c4c4;border-top:1px solid #d8d8d8;border-right:1px solid #fff"></div>
<div class="a" style="left:868px;top:665px;width:120px;height:24px;border-left:1px solid #c4c4c4;border-top:1px solid #d8d8d8;border-right:1px solid #fff"></div>
<div class="a" style="left:988px;top:665px;width:107px;height:24px;border-left:1px solid #c4c4c4;border-top:1px solid #d8d8d8;border-right:1px solid #fff"></div>
<div class="a" style="left:1095px;top:665px;width:29px;height:24px;border-left:1px solid #c4c4c4;border-top:1px solid #d8d8d8;border-right:1px solid #fff"></div>
<div class="a" style="left:1124px;top:665px;width:29px;height:24px;border-left:1px solid #c4c4c4;border-top:1px solid #d8d8d8;border-right:1px solid #fff"></div>
<div class="a" style="left:1153px;top:665px;width:30px;height:24px;border-left:1px solid #c4c4c4;border-top:1px solid #d8d8d8;border-right:1px solid #fff"></div>
<div class="a" style="left:1183px;top:665px;width:29px;height:24px;border-left:1px solid #c4c4c4;border-top:1px solid #d8d8d8;border-right:1px solid #fff"></div>
<div class="a" style="left:1212px;top:665px;width:29px;height:24px;border-left:1px solid #c4c4c4;border-top:1px solid #d8d8d8;border-right:1px solid #fff"></div>
<div class="a" style="left:1241px;top:665px;width:29px;height:24px;border-left:1px solid #c4c4c4;border-top:1px solid #d8d8d8;border-right:1px solid #fff"></div>
<div class="a" style="left:1270px;top:665px;width:29px;height:24px;border-left:1px solid #c4c4c4;border-top:1px solid #d8d8d8;border-right:1px solid #fff"></div>
<svg class="a" style="left:815px;top:668px;" width="20" height="18" viewBox="0 0 20 18"><path d="M2 14 h6 q4 0 5 -4 v-6" stroke="#3a6ab0" stroke-width="1.2" fill="none"/><circle cx="3" cy="14" r="2" fill="#fff" stroke="#3a6ab0"/><circle cx="9" cy="14" r="2" fill="#fff" stroke="#3a6ab0"/><circle cx="14" cy="3" r="2" fill="#fff" stroke="#3a6ab0"/></svg>
<svg class="a" style="left:850px;top:671px;" width="8" height="8" viewBox="0 0 8 8"><rect x="0.5" y="3.5" width="7" height="4.5" fill="#c8b020"/><path d="M2 4 V2 a2 2 0 0 1 4 0 V4" stroke="#a08818" fill="none"/></svg>
<div class="t" style="left:872px;top:672.27px;font-size:11.5px;line-height:11.5px;color:#1a1a1a;transform:scaleX(0.9705);">Level 9</div>
<svg class="a" style="left:1190px;top:671px;" width="11" height="11" viewBox="0 0 11 11"><rect x="1.5" y="2.5" width="8" height="7" fill="none" stroke="#aaa"/><path d="M1 1 h4" stroke="#aaa"/></svg>
<svg class="a" style="left:1278px;top:671px;" width="12" height="11" viewBox="0 0 12 11"><rect x="0.5" y="0.5" width="10" height="10" fill="none" stroke="#aaa"/><rect x="3" y="3" width="5" height="5" fill="none" stroke="#aaa"/></svg>
<div class="a" style="left:0px;top:690px;width:1299px;height:41px;background:#243138"></div>
<div class="a" style="left:404px;top:690px;width:49px;height:41px;background:#4a555b"></div>
<svg class="a" style="left:16px;top:703px;" width="18" height="17" viewBox="0 0 18 17"><path d="M0 2.3 L7.3 1.3 V8 H0Z M8.3 1.1 L18 0 V8 H8.3Z M0 9 H7.3 V15.7 L0 14.7Z M8.3 9 H18 V17 L8.3 15.9Z" fill="#fff"/></svg>
<svg class="a" style="left:62px;top:699px;" width="24" height="24" viewBox="0 0 24 24"><circle cx="14" cy="9" r="7" fill="none" stroke="#fff" stroke-width="2"/><path d="M9 14 L2 22" stroke="#fff" stroke-width="2.4"/></svg>
<svg class="a" style="left:112px;top:702px;" width="20" height="18" viewBox="0 0 20 18"><rect x="2" y="3" width="11" height="11" fill="none" stroke="#bfc6ca" stroke-width="1.4"/><path d="M0 1 h15 M0 16 h15 M17 1 v2 M17 6 v6 M17 15 v2" stroke="#bfc6ca" stroke-width="1.4"/></svg>
<svg class="a" style="left:162px;top:700px;" width="24" height="21" viewBox="0 0 24 21"><path d="M1 2 h8 l2 2 h12 v16 h-22z" fill="#e8b83a"/><rect x="1" y="7" width="22" height="13" fill="#f8d468"/><rect x="7" y="12" width="10" height="6" fill="#3a8ad8"/></svg>
<div class="a" style="left:154px;top:729px;width:42px;height:2px;background:#7aa8d0"></div>
<svg class="a" style="left:213px;top:700px;" width="23" height="21" viewBox="0 0 23 21"><rect x="8" y="2" width="14" height="17" fill="#fff" stroke="#1e7145"/><path d="M10 6h10M10 10h10M10 14h10M15 4v14" stroke="#1e7145"/><rect x="1" y="3" width="12" height="15" fill="#1e7145"/><text x="3" y="15" font-size="10" font-weight="700" font-family="Liberation Sans" fill="#fff">X</text></svg>
<svg class="a" style="left:262px;top:698px;" width="26" height="26" viewBox="0 0 26 26"><circle cx="11" cy="12" r="10.5" fill="#fff" stroke="#2a70e0" stroke-width="1.2"/><text x="3" y="15" font-size="8" font-weight="700" font-family="Liberation Sans" fill="#2a70e0">Zalo</text><circle cx="19" cy="19" r="6.5" fill="#e02020"/><text x="14.5" y="22" font-size="7.5" font-weight="700" font-family="Liberation Sans" fill="#fff">5+</text></svg>
<div class="a" style="left:255px;top:729px;width:42px;height:2px;background:#7aa8d0"></div>
<svg class="a" style="left:313px;top:698px;" width="26" height="26" viewBox="0 0 26 26"><path d="M13 13 L2.17 6.75 A12.5 12.5 0 0 1 23.83 6.75 Z" fill="#db4437"/><path d="M13 13 L23.83 6.75 A12.5 12.5 0 0 1 13 25.5 Z" fill="#f4c20d"/><path d="M13 13 L13 25.5 A12.5 12.5 0 0 1 2.17 6.75 Z" fill="#0f9d58"/><circle cx="13" cy="13" r="5.8" fill="#fff"/><circle cx="13" cy="13" r="4.5" fill="#4285f4"/></svg>
<div class="a" style="left:306px;top:729px;width:42px;height:2px;background:#7aa8d0"></div>
<svg class="a" style="left:365px;top:700px;" width="24" height="21" viewBox="0 0 24 21"><rect x="8" y="2" width="15" height="17" fill="#fff" stroke="#2b579a"/><path d="M11 6h10M11 10h10M11 14h10" stroke="#2b579a"/><rect x="1" y="3" width="13" height="15" fill="#2b579a"/><text x="2" y="15" font-size="10" font-weight="700" font-family="Liberation Sans" fill="#fff">W</text></svg>
<div class="a" style="left:357px;top:729px;width:42px;height:2px;background:#7aa8d0"></div>
<svg class="a" style="left:414px;top:698px;" width="28" height="26" viewBox="0 0 28 26"><path d="M14 3 A10 10 0 1 0 22 20" stroke="#e84a4a" stroke-width="5" fill="none"/><circle cx="15" cy="13" r="5" fill="#3a8ad8"/><circle cx="20" cy="3" r="1.5" fill="#fff"/></svg>
<div class="a" style="left:404px;top:729px;width:49px;height:2px;background:#7aa8d0"></div>
<svg class="a" style="left:864px;top:700px;" width="17" height="23" viewBox="0 0 17 23"><rect x="3" y="1" width="5" height="15" rx="2.5" fill="#cfe4f8" stroke="#3a8ad8" stroke-width="1.2"/><circle cx="5.5" cy="17.5" r="4" fill="#3a8ad8"/><path d="M13 20 V5 M10 8 L13 4 L16 8" stroke="#e83030" stroke-width="2" fill="none"/><path d="M10 2 h6" stroke="#e83030" stroke-width="1.5"/></svg>
<div class="t" style="left:893px;top:704.30px;font-size:15px;line-height:15px;color:#fff;transform:scaleX(0.9136);">Gần mức kỷ lục</div>
<svg class="a" style="left:1015px;top:705px;" width="13" height="8" viewBox="0 0 13 8"><path d="M1 7 L6.5 1.5 L12 7" stroke="#fff" stroke-width="1.3" fill="none"/></svg>
<svg class="a" style="left:1038px;top:702px;" width="17" height="17" viewBox="0 0 17 17"><path d="M1 6 h3 l5 -4 v13 l-5 -4 h-3z" fill="none" stroke="#fff" stroke-width="1.1"/><path d="M11 6 q2 2.5 0 5 M13 4 q4 4.5 0 9" stroke="#fff" stroke-width="1.1" fill="none"/></svg>
<svg class="a" style="left:1062px;top:702px;" width="19" height="17" viewBox="0 0 19 17"><path d="M3 12 a4 4 0 0 1 1 -8 a5 5 0 0 1 9 1 a3.5 3.5 0 0 1 1 7z" fill="#ddd"/><circle cx="13" cy="12" r="4.5" fill="#e02030"/><path d="M11 10 l4 4 M15 10 l-4 4" stroke="#fff" stroke-width="1.2"/></svg>
<svg class="a" style="left:1087px;top:704px;" width="17" height="12" viewBox="0 0 17 12"><rect x="0.75" y="1.75" width="13" height="8.5" fill="none" stroke="#fff" stroke-width="1.3"/><rect x="2.5" y="3.5" width="9.5" height="5" fill="#fff"/><rect x="14.5" y="4" width="2" height="4" fill="#fff"/></svg>
<svg class="a" style="left:1113px;top:702px;" width="17" height="17" viewBox="0 0 17 17"><path d="M2 15 A13 13 0 0 1 15 2 M5 15 A10 10 0 0 1 15 5 M8 15 A7 7 0 0 1 15 8" stroke="#fff" stroke-width="1.1" fill="none" stroke-dasharray="2 1"/><circle cx="14" cy="14" r="1.5" fill="#fff"/></svg>
<div class="t" style="left:1138px;top:705.84px;font-size:12px;line-height:12px;color:#fff;transform:scaleX(0.8841);">ENG</div>
<div class="t" style="left:1185px;top:695.84px;font-size:12px;line-height:12px;color:#fff;transform:scaleX(0.9312);">1:14 CH</div>
<div class="t" style="left:1175px;top:714.84px;font-size:12px;line-height:12px;color:#fff;transform:scaleX(1.0489);">10/05/2024</div>
<svg class="a" style="left:1255px;top:700px;" width="28" height="28" viewBox="0 0 28 28"><path d="M2 2.5 h17 v11.5 h-9 l-4 4 v-4 h-4z" fill="#f4f4f4"/><path d="M5 6h11M5 8.5h11M5 11h8" stroke="#5a6066" stroke-width="1"/><circle cx="18.5" cy="18.5" r="7.5" fill="#353c40" stroke="#9aa0a4" stroke-width="1"/><text x="15" y="23" font-size="11.5" font-family="Liberation Sans" fill="#fff">5</text></svg>
<div class="a" style="left:1294px;top:690px;width:1px;height:41px;background:#5a6468"></div>
<div class="a" style="left:350px;top:18px;width:859px;height:92px;background:transparent;box-shadow:0 0 9px 1px rgba(0,0,0,.22);left:357px;top:24px;width:845px;height:79px"></div>
<div class="a" style="left:357px;top:24px;width:845px;height:79px;background:#fff;border:1px solid #8c8c8c;border-bottom:none"></div>
<svg class="a" style="left:365px;top:30px;" width="16" height="16" viewBox="0 0 16 16"><defs><linearGradient id="lg2" x1="0" y1="0" x2="1" y2="1"><stop offset="0" stop-color="#0a2c4c"/><stop offset=".5" stop-color="#17507e"/><stop offset="1" stop-color="#0c3456"/></linearGradient></defs><rect x="0.3" y="0.3" width="15.4" height="15.4" rx="2.5" fill="url(#lg2)"/><path d="M2.5 14 L6.8 3.5" stroke="#86ccf2" stroke-width="1.4"/><path d="M6.2 9.5 C8 10.5 9.5 8 10.5 3.5" stroke="#5aa4d6" stroke-width="1.2" fill="none"/><path d="M9.8 10.5 L12.8 3" stroke="#4a90c8" stroke-width="1.1"/><circle cx="12.6" cy="13" r="1.5" fill="#d8ecf8"/></svg>
<div class="t" style="left:385px;top:34.84px;font-size:12px;line-height:12px;color:#1e1e1e;transform:scaleX(0.9781);">gCadas - Xã Liên Sơn - Huyện Kim Bảng - Hà Nam</div>
<div class="a" style="left:1078px;top:39px;width:11px;height:1px;background:#333"></div>
<div class="a" style="left:1125px;top:33px;width:11px;height:11px;border:1px solid #cfcfcf"></div>
<svg class="a" style="left:1172px;top:33px;" width="12" height="12" viewBox="0 0 12 12"><path d="M0.5 0.5L11.5 11.5M11.5 0.5L0.5 11.5" stroke="#333" stroke-width="1.1"/></svg>
<div class="a" style="left:358px;top:54px;width:843px;height:22px;background:#bfd9f7"></div>
<div class="a" style="left:358px;top:54px;width:61px;height:22px;background:linear-gradient(#fdf2cc,#fbe6a8);border:1px solid #f5dc9a"></div>
<div class="t" style="left:363px;top:60.84px;font-size:12px;line-height:12px;color:#14213a;transform:scaleX(1.0472);">Hệ thống</div>
<div class="t" style="left:424px;top:60.84px;font-size:12px;line-height:12px;color:#14213a;transform:scaleX(0.9725);">Bản đồ</div>
<div class="t" style="left:473px;top:60.84px;font-size:12px;line-height:12px;color:#14213a;transform:scaleX(0.9832);">Hồ sơ</div>
<div class="t" style="left:515px;top:60.84px;font-size:12px;line-height:12px;color:#14213a;transform:scaleX(0.9621);">Cơ sở dữ liệu</div>
<div class="t" style="left:596px;top:60.84px;font-size:12px;line-height:12px;color:#14213a;transform:scaleX(0.9531);">Cơ sở dữ liệu TT75</div>
<div class="t" style="left:707px;top:60.84px;font-size:12px;line-height:12px;color:#14213a;transform:scaleX(0.9991);">Biến động</div>
<div class="t" style="left:771px;top:60.84px;font-size:12px;line-height:12px;color:#14213a;transform:scaleX(1.0066);">Công cụ</div>
<div class="t" style="left:826px;top:60.84px;font-size:12px;line-height:12px;color:#14213a;transform:scaleX(0.9686);">Kiểm kê</div>
<div class="t" style="left:878px;top:60.84px;font-size:12px;line-height:12px;color:#14213a;transform:scaleX(0.9917);">Thống kê cấp xã</div>
<div class="t" style="left:976px;top:60.84px;font-size:12px;line-height:12px;color:#14213a;transform:scaleX(0.9602);">Trợ giúp</div>
<div class="t" style="left:1030px;top:60.84px;font-size:12px;line-height:12px;color:#14213a;transform:scaleX(0.9655);">Plugins</div>
<div class="a" style="left:358px;top:76px;width:843px;height:4px;background:linear-gradient(#d2e4f8,#e2eefb)"></div>
<div class="a" style="left:358px;top:80px;width:843px;height:23px;background:#c0daf6"></div>
<div class="a" style="left:358px;top:102px;width:843px;height:1px;background:#9eb4cc"></div>
<svg class="a" style="left:566px;top:84px;" width="8" height="16" viewBox="0 0 8 16"><circle cx="4" cy="5" r="3" fill="none" stroke="#3a70b0" stroke-width="1.5"/><circle cx="4" cy="11" r="3" fill="none" stroke="#3a70b0" stroke-width="1.5"/></svg>
<svg class="a" style="left:586px;top:83px;" width="16" height="17" viewBox="0 0 16 17"><path d="M1 5 L8 1 L15 5 L8 9Z" fill="#e8f4fb" stroke="#4a8ab8"/><path d="M1 8 L8 12 L15 8 M1 11 L8 15 L12 13" stroke="#4a8ab8" fill="none"/><path d="M10 10 L15 15 M15 10 L10 15" stroke="#e02030" stroke-width="1.8"/></svg>
<svg class="a" style="left:613px;top:82px;" width="12" height="18" viewBox="0 0 12 18"><path d="M6 1 a5 5 0 0 1 5 5 c0 3 -5 8 -5 8 c0 0 -5 -5 -5 -8 a5 5 0 0 1 5 -5z" fill="#fff" stroke="#1a8ae0" stroke-width="1.6"/><ellipse cx="6" cy="15.5" rx="5" ry="2" fill="#1a8ae0"/></svg>
<svg class="a" style="left:640px;top:82px;" width="16" height="18" viewBox="0 0 16 18"><rect x="1" y="1" width="11" height="14" fill="#fff" stroke="#888"/><path d="M3 4h7M3 6h7M3 8h7" stroke="#999"/><rect x="3" y="10" width="5" height="6" fill="#40a040"/><rect x="8" y="10" width="7" height="7" fill="#e05a30"/></svg>
<div class="a" style="left:664px;top:82px;width:1px;height:18px;background:#e8f2fc"></div>
<svg class="a" style="left:671px;top:82px;" width="17" height="18" viewBox="0 0 17 18"><rect x="1" y="1" width="14" height="15" fill="#fff" stroke="#2a6ac8" stroke-width="1.5"/><rect x="1" y="1" width="14" height="3" fill="#2a6ac8"/><path d="M4 7h8M4 10h8M4 13h5" stroke="#2a6ac8"/><path d="M10 15 L16 9" stroke="#2a6ac8" stroke-width="1.6"/></svg>
<svg class="a" style="left:698px;top:82px;" width="16" height="18" viewBox="0 0 16 18"><rect x="1" y="1" width="14" height="16" fill="#fff" stroke="#666"/><path d="M4 9 H9 V5 M9 5 h2" stroke="#333" stroke-width="1.3" fill="none"/><circle cx="5" cy="9" r="1.3" fill="#2a8a40"/><circle cx="9" cy="12" r="1.3" fill="#2a8a40"/></svg>
<svg class="a" style="left:725px;top:81px;" width="17" height="19" viewBox="0 0 17 19"><path d="M1 18 V4 L10 4 L16 18Z" fill="#2a9a4a"/><path d="M1 18 L8 10 L16 18Z" fill="#f0c020"/><path d="M1 12 L7 7 L2 4Z" fill="#3a8ad8"/><path d="M12 1 a4 4 0 0 1 4 4 c0 3 -4 7 -4 7 c0 0 -4 -4 -4 -7 a4 4 0 0 1 4 -4z" fill="#e02828"/></svg>
<svg class="a" style="left:752px;top:82px;" width="15" height="18" viewBox="0 0 15 18"><rect x="1" y="1" width="13" height="16" fill="#b8e080" stroke="#6a9a40"/><rect x="4" y="2" width="6" height="14" fill="#f4fbe8"/></svg>
<svg class="a" style="left:779px;top:82px;" width="17" height="18" viewBox="0 0 17 18"><path d="M3 3 L14 15 M14 3 L3 15" stroke="#666" stroke-width="2.4"/><path d="M1 5 L5 1 M12 1 L16 5" stroke="#c89030" stroke-width="2"/><circle cx="8.5" cy="9" r="2" fill="#999"/></svg>
<svg class="a" style="left:806px;top:81px;" width="17" height="19" viewBox="0 0 17 19"><circle cx="8.5" cy="10" r="7" fill="none" stroke="#e04848" stroke-width="3"/><circle cx="8.5" cy="10" r="3.5" fill="#3a7ac8"/><path d="M13 4 L16 1" stroke="#3a7ac8" stroke-width="2"/></svg>
<div class="a" style="left:358px;top:77px;width:212px;height:201px;background:#fcfcfc;border:1px solid #9b9b9b;box-shadow:2px 2px 3px rgba(0,0,0,.25)"></div>
<div class="a" style="left:359px;top:98px;width:25px;height:179px;background:#f0f1f3"></div>
<div class="a" style="left:384px;top:98px;width:1px;height:179px;background:#e2e3e4"></div>
<div class="a" style="left:360px;top:79px;width:209px;height:19px;background:linear-gradient(#fef8dc,#fce99a 35%,#f9d860 70%,#fde6a0);border:1px solid #f2cf7a;border-radius:2px"></div>
<div class="t" style="left:389px;top:82.84px;font-size:12px;line-height:12px;color:#2a2416;transform:scaleX(0.9747);">Kết nối cơ sở dữ liệu</div>
<div class="t" style="left:389px;top:104.84px;font-size:12px;line-height:12px;color:#2a2a3c;transform:scaleX(0.9778);">Gộp cơ sở dữ liệu</div>
<div class="t" style="left:389px;top:126.84px;font-size:12px;line-height:12px;color:#2a2a3c;transform:scaleX(0.9742);">Cập nhật cơ sở dữ liệu</div>
<div class="t" style="left:389px;top:149.84px;font-size:12px;line-height:12px;color:#2a2a3c;transform:scaleX(0.9911);">Thiết lập đơn vị hành chính</div>
<div class="t" style="left:389px;top:171.84px;font-size:12px;line-height:12px;color:#2a2a3c;transform:scaleX(1.0063);">Quản lý danh mục</div>
<div class="t" style="left:389px;top:193.84px;font-size:12px;line-height:12px;color:#2a2a3c;transform:scaleX(1.0050);">Thông tin bản vẽ hiện thời</div>
<div class="t" style="left:389px;top:214.84px;font-size:12px;line-height:12px;color:#2a2a3c;transform:scaleX(1.0016);">Tuỳ chọn</div>
<div class="t" style="left:389px;top:236.84px;font-size:12px;line-height:12px;color:#2a2a3c;transform:scaleX(1.0055);">Thiết lập phiên bản phần mềm</div>
<div class="t" style="left:389px;top:259.84px;font-size:12px;line-height:12px;color:#2a2a3c;transform:scaleX(0.9776);">Thoát</div>
<div class="a" style="left:385px;top:143px;width:184px;height:1px;background:#e0e0e0"></div>
<div class="a" style="left:385px;top:253px;width:184px;height:1px;background:#e0e0e0"></div>
<svg class="a" style="left:560px;top:174px;" width="4" height="7" viewBox="0 0 4 7"><path d="M0 0 L4 3.5 L0 7Z" fill="#222"/></svg>
<div class="a" style="left:955px;top:189px;width:213px;height:99px;background:#f0f0f0;border:1px solid #cfcfcf;box-shadow:0 0 6px rgba(0,0,0,.28)"></div>
<div class="a" style="left:956px;top:190px;width:211px;height:21px;background:#fff"></div>
<svg class="a" style="left:958px;top:192px;" width="13" height="17" viewBox="0 0 13 17"><path d="M3 16 C1 11 1 6 3 3 L5 2 L6 6 L7 1 L9 2 L9 7 L11 4 L12 6 L11 12 L8 16Z" fill="#c8c8c8" stroke="#8a8a8a" stroke-width="0.8"/></svg>
<div class="t" style="left:976px;top:195.84px;font-size:12px;line-height:12px;color:#9a9a9a;transform:scaleX(0.9270);">Elemen...</div>
<div class="a" style="left:1044px;top:201px;width:11px;height:1px;background:#a8a8a8"></div>
<div class="a" style="left:1091px;top:196px;width:10px;height:10px;border:1px solid #e4e4e4"></div>
<svg class="a" style="left:1139px;top:195px;" width="11" height="11" viewBox="0 0 11 11"><path d="M0.5 0.5L10.5 10.5M10.5 0.5L0.5 10.5" stroke="#9a9a9a" stroke-width="1"/></svg>
<div class="a" style="left:968px;top:220px;width:75px;height:19px;border-top:1px solid #c8c8c8;border-left:1px solid #c8c8c8;background:#f2f2f2"></div>
<div class="a" style="left:969px;top:222px;width:15px;height:15px;background:#f0dca0;border:1px solid #b09040"></div>
<svg class="a" style="left:970px;top:223px;" width="13" height="13" viewBox="0 0 13 13"><path d="M6.5 1 V12 M1 6.5 H12" stroke="#3a6ac8" stroke-width="1.5"/><rect x="4" y="4" width="5" height="5" fill="none" stroke="#3a6ac8"/></svg>
<svg class="a" style="left:986px;top:224px;" width="12" height="10" viewBox="0 0 12 10"><rect x="1" y="2" width="9" height="6" fill="#e8f0fa" stroke="#3a6ac8"/></svg>
<svg class="a" style="left:999px;top:224px;" width="13" height="10" viewBox="0 0 13 10"><path d="M3 2 H12 L10 8 H1Z" fill="#e8f0fa" stroke="#3a6ac8"/></svg>
<svg class="a" style="left:1014px;top:223px;" width="10" height="11" viewBox="0 0 10 11"><circle cx="5" cy="5.5" r="4" fill="none" stroke="#3a6ac8"/></svg>
<svg class="a" style="left:1028px;top:223px;" width="11" height="11" viewBox="0 0 11 11"><path d="M1 10 L10 1" stroke="#8090b0" stroke-width="1.1"/></svg>
<div class="a" style="left:968px;top:248px;width:75px;height:19px;border-top:1px solid #c8c8c8;border-left:1px solid #c8c8c8;background:#f2f2f2"></div>
<div class="a" style="left:969px;top:250px;width:15px;height:15px;background:#f0dca0;border:1px solid #b09040"></div>
<svg class="a" style="left:970px;top:251px;" width="13" height="13" viewBox="0 0 13 13"><path d="M6.5 1 V12 M1 6.5 H12 M2 2 L11 11 M11 2 L2 11" stroke="#d0a040" stroke-width="0.8"/><rect x="7" y="7" width="5" height="5" fill="#fff"/></svg>
<svg class="a" style="left:986px;top:251px;" width="12" height="12" viewBox="0 0 12 12"><path d="M6 1 V11 M1 6 H11" stroke="#3a8ad8" stroke-width="2.2"/></svg>
<svg class="a" style="left:999px;top:251px;" width="12" height="12" viewBox="0 0 12 12"><path d="M1 6 H11" stroke="#3a8ad8" stroke-width="2.2"/></svg>
<svg class="a" style="left:1014px;top:251px;" width="11" height="12" viewBox="0 0 11 12"><path d="M1 11 L10 2 V11Z" fill="#1a4aa8"/><path d="M1 11 L1 2 L10 2Z" fill="#fff" stroke="#1a4aa8"/></svg>
<svg class="a" style="left:1028px;top:250px;" width="12" height="13" viewBox="0 0 12 13"><circle cx="6" cy="6" r="5.5" fill="#1a4aa8"/><path d="M3 3 q3 2 2 5 q2 1 3 -3" fill="#8ac0f0"/><path d="M6 8 l2 4" stroke="#fff"/></svg>
<svg class="a" style="left:1099px;top:223px;" width="15" height="15" viewBox="0 0 15 15"><circle cx="7.5" cy="7.5" r="6.5" fill="#f2d0e0" stroke="#e06090" stroke-width="1.4"/><rect x="4" y="4" width="7" height="7" fill="#3a6ac8"/><path d="M3 3 L12 12" stroke="#e06090" stroke-width="1.3"/></svg>
<svg class="a" style="left:1099px;top:251px;" width="13" height="16" viewBox="0 0 13 16"><rect x="1" y="1" width="10" height="10" fill="#c8c8c8" stroke="#aaa"/><path d="M5 5 L12 11 L9 11 L10 15 L8 15 L7 12 L5 14Z" fill="#555"/></svg>
<svg class="a" style="left:1139px;top:266px;" width="6" height="3" viewBox="0 0 6 3"><path d="M0 0H6L3.0 3Z" fill="#000"/></svg>
</body></html>
